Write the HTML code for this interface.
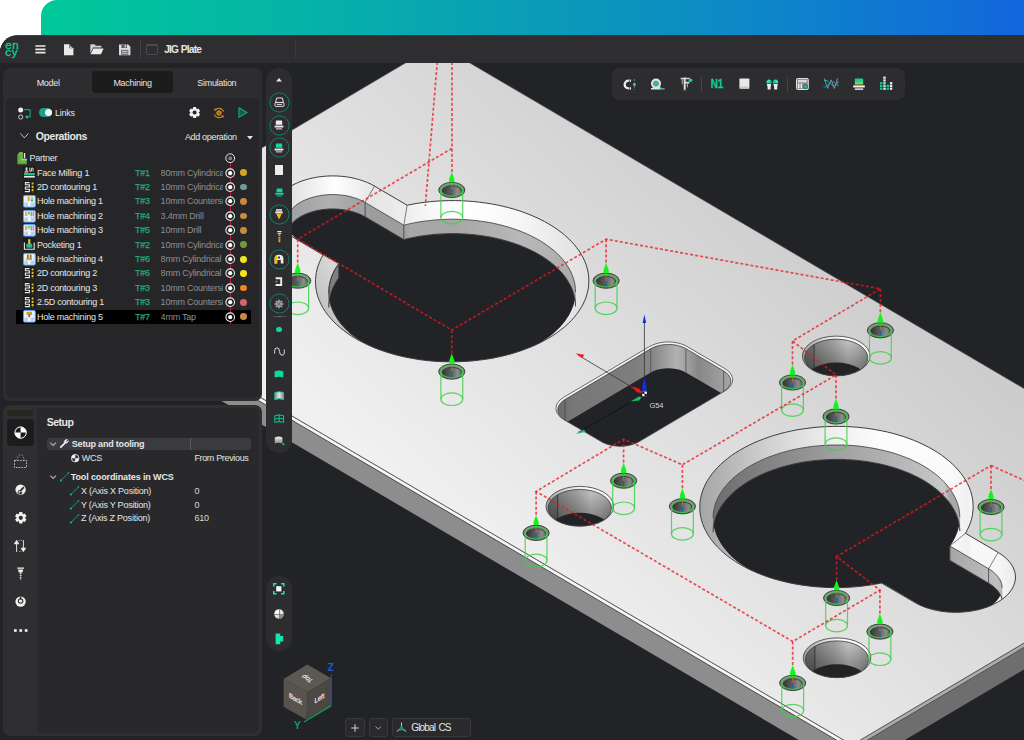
<!DOCTYPE html><html><head><meta charset="utf-8"><title>JIG Plate</title><style>
*{box-sizing:border-box;margin:0;padding:0}
html,body{width:1024px;height:740px;overflow:hidden;background:#fff}
body{position:relative;font-family:"Liberation Sans",sans-serif;font-size:9px;color:#e6e6e6;letter-spacing:-0.2px}
.abs{position:absolute}
#banner{left:41px;top:0;width:983px;height:40px;border-top-left-radius:16px;
 background:linear-gradient(90deg,#00c89a 0%,#06b3a8 26.3%,#0a9bb8 51.8%,#0e82cc 77.2%,#1266dc 100%)}
#app{left:0;top:0;width:1024px;height:740px;background:#222326;clip-path:inset(35.5px 0 0 0 round 17px 0 0 0)}
#scene{position:absolute;left:0;top:0}
#titlebar{left:0;top:35px;width:1024px;height:27.5px;background:#2e2e30}
.sepv{position:absolute;width:1px;background:#434345}
.panel{position:absolute;background:#2d2d2f;border-radius:7px}
.inner{position:absolute;background:#262628;border-radius:5px}
.t{position:absolute;white-space:pre;line-height:12px;height:12px}
.b{font-weight:700}
.row{position:absolute;left:0;width:259px;height:14.4px}
.tn{color:#1fa97c}
.tl{color:#8f8f91}
svg{position:absolute;overflow:visible}
</style></head><body>
<div id="banner" class="abs"></div>
<div id="app" class="abs">
<svg id="scene" width="1024" height="740" viewBox="0 0 1024 740">
<defs>
<linearGradient id="gTop" gradientUnits="userSpaceOnUse" x1="806.7" y1="215.1" x2="491" y2="563.2"><stop offset="0" stop-color="#cdcdcd"/><stop offset="1" stop-color="#f0f0f0"/></linearGradient>
<linearGradient id="gBand1" gradientUnits="userSpaceOnUse" x1="292" y1="0" x2="589" y2="0"><stop offset="0.000" stop-color="#e2e2e2"/><stop offset="0.148" stop-color="#ffffff"/><stop offset="0.269" stop-color="#e6e6e6"/><stop offset="0.330" stop-color="#e9e9e9"/><stop offset="0.384" stop-color="#eeeeee"/><stop offset="0.465" stop-color="#f8f8f8"/><stop offset="0.599" stop-color="#ffffff"/><stop offset="0.768" stop-color="#f6f6f6"/><stop offset="0.902" stop-color="#e8e8e8"/><stop offset="1.000" stop-color="#e0e0e0"/></linearGradient>
<linearGradient id="gWall1" gradientUnits="userSpaceOnUse" x1="292" y1="0" x2="582" y2="0"><stop offset="0.000" stop-color="#a0a0a0"/><stop offset="0.131" stop-color="#b0b0b0"/><stop offset="0.276" stop-color="#9c9c9c"/><stop offset="0.390" stop-color="#9e9e9e"/><stop offset="0.407" stop-color="#a8a8a8"/><stop offset="0.552" stop-color="#a6a6a6"/><stop offset="0.786" stop-color="#b8b8b8"/><stop offset="0.883" stop-color="#b2b2b2"/><stop offset="1.000" stop-color="#a8a8a8"/></linearGradient>
<linearGradient id="gBand2" gradientUnits="userSpaceOnUse" x1="699" y1="0" x2="1016" y2="0"><stop offset="0.000" stop-color="#a4a4a4"/><stop offset="0.098" stop-color="#b8b8b8"/><stop offset="0.224" stop-color="#d2d2d2"/><stop offset="0.413" stop-color="#eeeeee"/><stop offset="0.571" stop-color="#fcfcfc"/><stop offset="0.792" stop-color="#fafafa"/><stop offset="0.849" stop-color="#f0f0f0"/><stop offset="0.861" stop-color="#f8f8f8"/><stop offset="0.950" stop-color="#f6f6f6"/><stop offset="1.000" stop-color="#e8e8e8"/></linearGradient>
<linearGradient id="gWall2" gradientUnits="userSpaceOnUse" x1="699" y1="0" x2="1016" y2="0"><stop offset="0.000" stop-color="#686868"/><stop offset="0.129" stop-color="#787878"/><stop offset="0.319" stop-color="#909090"/><stop offset="0.432" stop-color="#a0a0a0"/><stop offset="0.634" stop-color="#b6b6b6"/><stop offset="0.773" stop-color="#c8c8c8"/><stop offset="0.792" stop-color="#a6a6a6"/><stop offset="0.940" stop-color="#c0c0c0"/><stop offset="0.950" stop-color="#b8b8b8"/><stop offset="1.000" stop-color="#b0b0b0"/></linearGradient>
<linearGradient id="gDark1" gradientUnits="userSpaceOnUse" x1="0" y1="250" x2="0" y2="330"><stop offset="0" stop-color="#000" stop-opacity="0.13"/><stop offset="1" stop-color="#000" stop-opacity="0.24"/></linearGradient>
<linearGradient id="gHole" x1="0" y1="0" x2="1" y2="0"><stop offset="0" stop-color="#6a6a6a"/><stop offset="0.15" stop-color="#6e6e6e"/><stop offset="0.155" stop-color="#7c7c7c"/><stop offset="0.45" stop-color="#9c9c9c"/><stop offset="0.68" stop-color="#bebebe"/><stop offset="0.85" stop-color="#b0b0b0"/><stop offset="1" stop-color="#989898"/></linearGradient>
<linearGradient id="gHoleV" x1="0" y1="0" x2="0" y2="1"><stop offset="0.1" stop-color="#000" stop-opacity="0"/><stop offset="0.75" stop-color="#000" stop-opacity="0.28"/></linearGradient>
<linearGradient id="gHoleB" x1="0" y1="0" x2="1" y2="0"><stop offset="0" stop-color="#9a9a9a"/><stop offset="0.35" stop-color="#e0e0e0"/><stop offset="0.6" stop-color="#ffffff"/><stop offset="1" stop-color="#f2f2f2"/></linearGradient>
<linearGradient id="gPock" gradientUnits="userSpaceOnUse" x1="556" y1="0" x2="734" y2="0"><stop offset="0" stop-color="#6a6a6a"/><stop offset="0.1" stop-color="#777777"/><stop offset="0.45" stop-color="#7e7e7e"/><stop offset="0.55" stop-color="#888888"/><stop offset="0.68" stop-color="#b2b2b2"/><stop offset="0.8" stop-color="#888888"/><stop offset="1" stop-color="#a8a8a8"/></linearGradient>
<linearGradient id="gSm" x1="0" y1="0" x2="1" y2="0"><stop offset="0" stop-color="#343434"/><stop offset="0.45" stop-color="#5c5c5c"/><stop offset="0.8" stop-color="#8c8c8c"/><stop offset="1" stop-color="#666666"/></linearGradient>
</defs>
<rect x="0" y="0" width="1024" height="740" fill="#222326"/>
<polygon points="47.8,276.8 852.0,749.2 852.0,771.3 47.8,298.9" fill="#8d8d8d"/>
<polygon points="852.0,749.2 1241.6,518.5 1241.6,540.6 852.0,771.3" fill="#6e6e6e"/>
<polygon points="49.7,273.6 852.0,744.9 852.0,749.2 47.8,276.8" fill="#f4f4f4" stroke="#3a3a3a" stroke-width="0.8"/>
<polygon points="852.0,744.9 1239.8,515.3 1241.6,518.5 852.0,749.2" fill="#ababab" stroke="#4a4a4a" stroke-width="0.8"/>
<polygon points="437.5,43.9 1239.8,515.3 852.0,744.9 49.7,273.6" fill="url(#gTop)" stroke="#4a4a4a" stroke-width="0.7"/>
<clipPath id="k0o"><path d="M407.1 205.2 L412.9 204.1 L418.8 203.1 L424.8 202.3 L430.8 201.6 L436.9 201.1 L443.0 200.8 L449.2 200.6 L455.3 200.6 L461.4 200.7 L467.5 201.1 L473.6 201.5 L479.6 202.2 L485.6 203.0 L491.5 203.9 L497.4 205.0 L503.1 206.3 L508.7 207.7 L514.3 209.2 L519.7 210.9 L524.9 212.8 L530.1 214.8 L535.0 216.9 L539.8 219.1 L544.4 221.5 L548.9 224.0 L553.1 226.6 L557.1 229.3 L561.0 232.1 L564.6 235.0 L567.9 238.1 L571.1 241.2 L574.0 244.3 L576.6 247.6 L579.1 250.9 L581.2 254.3 L583.1 257.7 L584.7 261.2 L586.1 264.7 L587.2 268.3 L588.0 271.9 L588.6 275.5 L588.8 279.1 L588.8 282.7 L588.6 286.3 L588.0 289.9 L587.2 293.5 L586.1 297.1 L584.7 300.6 L583.1 304.1 L581.2 307.6 L579.0 310.9 L576.6 314.3 L574.0 317.5 L571.1 320.7 L567.9 323.9 L564.5 326.9 L560.9 329.8 L557.1 332.7 L553.1 335.4 L548.8 338.0 L544.4 340.5 L539.8 342.9 L535.0 345.2 L530.0 347.3 L524.9 349.3 L519.6 351.2 L514.2 352.9 L508.7 354.5 L503.1 355.9 L497.3 357.2 L491.5 358.4 L485.6 359.3 L479.6 360.1 L473.6 360.8 L467.5 361.3 L461.4 361.6 L455.3 361.8 L449.1 361.8 L443.0 361.7 L436.9 361.4 L430.8 360.9 L424.8 360.3 L418.8 359.5 L412.9 358.5 L407.0 357.4 L401.3 356.2 L395.7 354.8 L390.1 353.2 L384.7 351.5 L379.5 349.7 L374.3 347.7 L369.4 345.6 L364.6 343.3 L360.0 341.0 L355.5 338.5 L351.3 335.9 L347.2 333.2 L343.4 330.3 L339.8 327.4 L336.4 324.4 L333.3 321.3 L330.4 318.1 L327.7 314.9 L325.3 311.6 L323.1 308.2 L321.2 304.7 L319.6 301.3 L318.2 297.7 L317.1 294.2 L316.3 290.6 L315.8 287.0 L315.5 283.4 L315.5 279.8 L315.8 276.2 L316.3 272.5 L317.1 269.0 L318.2 265.4 L319.6 261.9 L321.2 258.4 L323.1 254.9 L290.5 235.8 L287.4 233.8 L284.5 231.6 L281.9 229.3 L279.6 227.0 L277.7 224.5 L276.0 221.9 L274.8 219.2 L273.9 216.5 L273.3 213.8 L273.1 211.1 L273.3 208.3 L273.9 205.6 L274.8 202.9 L276.0 200.2 L277.7 197.6 L279.6 195.1 L281.9 192.7 L284.5 190.4 L287.4 188.3 L290.5 186.3 L294.0 184.4 L297.6 182.7 L301.5 181.1 L305.6 179.8 L309.8 178.6 L314.2 177.7 L318.7 176.9 L323.2 176.4 L327.9 176.0 L332.5 175.9 L337.2 176.0 L341.8 176.3 L346.4 176.8 L350.9 177.6 L355.2 178.5 L359.5 179.7 L363.6 181.0 L367.4 182.5 L371.1 184.2 L374.5 186.1Z"/></clipPath>
<clipPath id="k0i"><path d="M403.8 225.2 L409.1 223.9 L414.4 222.8 L419.9 221.8 L425.4 221.0 L430.9 220.4 L436.5 219.8 L442.2 219.5 L447.8 219.3 L453.5 219.2 L459.2 219.3 L464.8 219.6 L470.5 220.0 L476.1 220.5 L481.6 221.3 L487.1 222.1 L492.5 223.1 L497.8 224.3 L503.0 225.6 L508.1 227.0 L513.1 228.6 L518.0 230.3 L522.7 232.1 L527.3 234.1 L531.7 236.2 L536.0 238.4 L540.0 240.7 L543.9 243.1 L547.6 245.7 L551.1 248.3 L554.4 251.0 L557.5 253.8 L560.3 256.7 L562.9 259.7 L565.3 262.7 L567.4 265.8 L569.3 269.0 L571.0 272.1 L572.4 275.4 L573.5 278.7 L574.4 282.0 L575.1 285.3 L575.4 288.6 L575.5 292.0 L575.4 295.3 L575.0 298.7 L574.3 302.0 L573.4 305.3 L572.2 308.6 L570.7 311.8 L569.1 315.0 L567.1 318.1 L564.9 321.2 L562.5 324.3 L559.9 327.2 L557.0 330.1 L553.9 332.9 L550.6 335.7 L547.0 338.3 L543.3 340.8 L539.4 343.3 L535.3 345.6 L531.0 347.8 L526.6 349.9 L522.0 351.8 L517.2 353.7 L512.3 355.4 L507.3 357.0 L502.2 358.4 L497.0 359.7 L491.6 360.9 L486.2 361.9 L480.7 362.7 L475.2 363.4 L469.6 364.0 L463.9 364.4 L458.3 364.7 L452.6 364.8 L446.9 364.7 L441.3 364.5 L435.6 364.2 L430.0 363.6 L424.5 363.0 L419.0 362.2 L413.6 361.2 L408.2 360.1 L403.0 358.8 L397.8 357.5 L392.8 355.9 L387.9 354.3 L383.1 352.5 L378.5 350.5 L374.0 348.5 L369.7 346.3 L365.6 344.0 L361.6 341.6 L357.9 339.1 L354.3 336.5 L350.9 333.9 L347.8 331.1 L344.9 328.2 L342.2 325.3 L339.7 322.3 L337.5 319.2 L335.6 316.0 L333.8 312.9 L332.3 309.6 L331.1 306.4 L330.1 303.1 L329.4 299.8 L329.0 296.4 L328.8 293.1 L328.9 289.7 L329.2 286.4 L329.8 283.1 L330.6 279.8 L331.7 276.5 L333.1 273.2 L334.7 270.0 L336.6 266.8 L338.7 263.7 L300.0 241.0 L297.5 239.4 L295.3 237.8 L293.3 236.0 L291.5 234.1 L290.0 232.2 L288.7 230.2 L287.7 228.2 L287.0 226.1 L286.6 223.9 L286.5 221.8 L286.6 219.7 L287.0 217.6 L287.7 215.5 L288.7 213.4 L290.0 211.4 L291.5 209.5 L293.3 207.6 L295.3 205.8 L297.5 204.1 L300.0 202.6 L302.6 201.1 L305.5 199.8 L308.5 198.6 L311.6 197.6 L314.9 196.7 L318.3 195.9 L321.8 195.3 L325.3 194.9 L328.9 194.6 L332.5 194.5 L336.1 194.6 L339.7 194.9 L343.3 195.3 L346.8 195.8 L350.1 196.6 L353.4 197.5 L356.6 198.5 L359.6 199.7 L362.4 201.0 L365.1 202.4Z"/></clipPath>
<g clip-path="url(#k0o)">
<path d="M407.1 205.2 L412.9 204.1 L418.8 203.1 L424.8 202.3 L430.8 201.6 L436.9 201.1 L443.0 200.8 L449.2 200.6 L455.3 200.6 L461.4 200.7 L467.5 201.1 L473.6 201.5 L479.6 202.2 L485.6 203.0 L491.5 203.9 L497.4 205.0 L503.1 206.3 L508.7 207.7 L514.3 209.2 L519.7 210.9 L524.9 212.8 L530.1 214.8 L535.0 216.9 L539.8 219.1 L544.4 221.5 L548.9 224.0 L553.1 226.6 L557.1 229.3 L561.0 232.1 L564.6 235.0 L567.9 238.1 L571.1 241.2 L574.0 244.3 L576.6 247.6 L579.1 250.9 L581.2 254.3 L583.1 257.7 L584.7 261.2 L586.1 264.7 L587.2 268.3 L588.0 271.9 L588.6 275.5 L588.8 279.1 L588.8 282.7 L588.6 286.3 L588.0 289.9 L587.2 293.5 L586.1 297.1 L584.7 300.6 L583.1 304.1 L581.2 307.6 L579.0 310.9 L576.6 314.3 L574.0 317.5 L571.1 320.7 L567.9 323.9 L564.5 326.9 L560.9 329.8 L557.1 332.7 L553.1 335.4 L548.8 338.0 L544.4 340.5 L539.8 342.9 L535.0 345.2 L530.0 347.3 L524.9 349.3 L519.6 351.2 L514.2 352.9 L508.7 354.5 L503.1 355.9 L497.3 357.2 L491.5 358.4 L485.6 359.3 L479.6 360.1 L473.6 360.8 L467.5 361.3 L461.4 361.6 L455.3 361.8 L449.1 361.8 L443.0 361.7 L436.9 361.4 L430.8 360.9 L424.8 360.3 L418.8 359.5 L412.9 358.5 L407.0 357.4 L401.3 356.2 L395.7 354.8 L390.1 353.2 L384.7 351.5 L379.5 349.7 L374.3 347.7 L369.4 345.6 L364.6 343.3 L360.0 341.0 L355.5 338.5 L351.3 335.9 L347.2 333.2 L343.4 330.3 L339.8 327.4 L336.4 324.4 L333.3 321.3 L330.4 318.1 L327.7 314.9 L325.3 311.6 L323.1 308.2 L321.2 304.7 L319.6 301.3 L318.2 297.7 L317.1 294.2 L316.3 290.6 L315.8 287.0 L315.5 283.4 L315.5 279.8 L315.8 276.2 L316.3 272.5 L317.1 269.0 L318.2 265.4 L319.6 261.9 L321.2 258.4 L323.1 254.9 L290.5 235.8 L287.4 233.8 L284.5 231.6 L281.9 229.3 L279.6 227.0 L277.7 224.5 L276.0 221.9 L274.8 219.2 L273.9 216.5 L273.3 213.8 L273.1 211.1 L273.3 208.3 L273.9 205.6 L274.8 202.9 L276.0 200.2 L277.7 197.6 L279.6 195.1 L281.9 192.7 L284.5 190.4 L287.4 188.3 L290.5 186.3 L294.0 184.4 L297.6 182.7 L301.5 181.1 L305.6 179.8 L309.8 178.6 L314.2 177.7 L318.7 176.9 L323.2 176.4 L327.9 176.0 L332.5 175.9 L337.2 176.0 L341.8 176.3 L346.4 176.8 L350.9 177.6 L355.2 178.5 L359.5 179.7 L363.6 181.0 L367.4 182.5 L371.1 184.2 L374.5 186.1Z" fill="url(#gBand1)"/>
<path d="M403.8 225.2 L409.1 223.9 L414.4 222.8 L419.9 221.8 L425.4 221.0 L430.9 220.4 L436.5 219.8 L442.2 219.5 L447.8 219.3 L453.5 219.2 L459.2 219.3 L464.8 219.6 L470.5 220.0 L476.1 220.5 L481.6 221.3 L487.1 222.1 L492.5 223.1 L497.8 224.3 L503.0 225.6 L508.1 227.0 L513.1 228.6 L518.0 230.3 L522.7 232.1 L527.3 234.1 L531.7 236.2 L536.0 238.4 L540.0 240.7 L543.9 243.1 L547.6 245.7 L551.1 248.3 L554.4 251.0 L557.5 253.8 L560.3 256.7 L562.9 259.7 L565.3 262.7 L567.4 265.8 L569.3 269.0 L571.0 272.1 L572.4 275.4 L573.5 278.7 L574.4 282.0 L575.1 285.3 L575.4 288.6 L575.5 292.0 L575.4 295.3 L575.0 298.7 L574.3 302.0 L573.4 305.3 L572.2 308.6 L570.7 311.8 L569.1 315.0 L567.1 318.1 L564.9 321.2 L562.5 324.3 L559.9 327.2 L557.0 330.1 L553.9 332.9 L550.6 335.7 L547.0 338.3 L543.3 340.8 L539.4 343.3 L535.3 345.6 L531.0 347.8 L526.6 349.9 L522.0 351.8 L517.2 353.7 L512.3 355.4 L507.3 357.0 L502.2 358.4 L497.0 359.7 L491.6 360.9 L486.2 361.9 L480.7 362.7 L475.2 363.4 L469.6 364.0 L463.9 364.4 L458.3 364.7 L452.6 364.8 L446.9 364.7 L441.3 364.5 L435.6 364.2 L430.0 363.6 L424.5 363.0 L419.0 362.2 L413.6 361.2 L408.2 360.1 L403.0 358.8 L397.8 357.5 L392.8 355.9 L387.9 354.3 L383.1 352.5 L378.5 350.5 L374.0 348.5 L369.7 346.3 L365.6 344.0 L361.6 341.6 L357.9 339.1 L354.3 336.5 L350.9 333.9 L347.8 331.1 L344.9 328.2 L342.2 325.3 L339.7 322.3 L337.5 319.2 L335.6 316.0 L333.8 312.9 L332.3 309.6 L331.1 306.4 L330.1 303.1 L329.4 299.8 L329.0 296.4 L328.8 293.1 L328.9 289.7 L329.2 286.4 L329.8 283.1 L330.6 279.8 L331.7 276.5 L333.1 273.2 L334.7 270.0 L336.6 266.8 L338.7 263.7 L300.0 241.0 L297.5 239.4 L295.3 237.8 L293.3 236.0 L291.5 234.1 L290.0 232.2 L288.7 230.2 L287.7 228.2 L287.0 226.1 L286.6 223.9 L286.5 221.8 L286.6 219.7 L287.0 217.6 L287.7 215.5 L288.7 213.4 L290.0 211.4 L291.5 209.5 L293.3 207.6 L295.3 205.8 L297.5 204.1 L300.0 202.6 L302.6 201.1 L305.5 199.8 L308.5 198.6 L311.6 197.6 L314.9 196.7 L318.3 195.9 L321.8 195.3 L325.3 194.9 L328.9 194.6 L332.5 194.5 L336.1 194.6 L339.7 194.9 L343.3 195.3 L346.8 195.8 L350.1 196.6 L353.4 197.5 L356.6 198.5 L359.6 199.7 L362.4 201.0 L365.1 202.4Z" fill="url(#gWall1)"/>
<g clip-path="url(#k0i)"><path d="M403.8 239.6 L409.1 238.3 L414.4 237.2 L419.9 236.2 L425.4 235.4 L430.9 234.8 L436.5 234.2 L442.2 233.9 L447.8 233.7 L453.5 233.6 L459.2 233.7 L464.8 234.0 L470.5 234.4 L476.1 234.9 L481.6 235.7 L487.1 236.5 L492.5 237.5 L497.8 238.7 L503.0 240.0 L508.1 241.4 L513.1 243.0 L518.0 244.7 L522.7 246.5 L527.3 248.5 L531.7 250.6 L536.0 252.8 L540.0 255.1 L543.9 257.5 L547.6 260.1 L551.1 262.7 L554.4 265.4 L557.5 268.2 L560.3 271.1 L562.9 274.1 L565.3 277.1 L567.4 280.2 L569.3 283.4 L571.0 286.6 L572.4 289.8 L573.5 293.1 L574.4 296.4 L575.1 299.7 L575.4 303.0 L575.5 306.4 L575.4 309.7 L575.0 313.1 L574.3 316.4 L573.4 319.7 L572.2 323.0 L570.7 326.2 L569.1 329.4 L567.1 332.6 L564.9 335.6 L562.5 338.7 L559.9 341.6 L557.0 344.5 L553.9 347.3 L550.6 350.1 L547.0 352.7 L543.3 355.2 L539.4 357.7 L535.3 360.0 L531.0 362.2 L526.6 364.3 L522.0 366.2 L517.2 368.1 L512.3 369.8 L507.3 371.4 L502.2 372.8 L497.0 374.1 L491.6 375.3 L486.2 376.3 L480.7 377.1 L475.2 377.8 L469.6 378.4 L463.9 378.8 L458.3 379.1 L452.6 379.2 L446.9 379.1 L441.3 378.9 L435.6 378.6 L430.0 378.0 L424.5 377.4 L419.0 376.6 L413.6 375.6 L408.2 374.5 L403.0 373.3 L397.8 371.9 L392.8 370.3 L387.9 368.7 L383.1 366.9 L378.5 364.9 L374.0 362.9 L369.7 360.7 L365.6 358.4 L361.6 356.0 L357.9 353.5 L354.3 350.9 L350.9 348.3 L347.8 345.5 L344.9 342.6 L342.2 339.7 L339.7 336.7 L337.5 333.6 L335.6 330.5 L333.8 327.3 L332.3 324.0 L331.1 320.8 L330.1 317.5 L329.4 314.2 L329.0 310.8 L328.8 307.5 L328.9 304.1 L329.2 300.8 L329.8 297.5 L330.6 294.2 L331.7 290.9 L333.1 287.6 L334.7 284.4 L336.6 281.2 L338.7 278.1 L300.0 255.4 L297.5 253.8 L295.3 252.2 L293.3 250.4 L291.5 248.5 L290.0 246.6 L288.7 244.6 L287.7 242.6 L287.0 240.5 L286.6 238.4 L286.5 236.2 L286.6 234.1 L287.0 232.0 L287.7 229.9 L288.7 227.8 L290.0 225.8 L291.5 223.9 L293.3 222.0 L295.3 220.2 L297.5 218.6 L300.0 217.0 L302.6 215.5 L305.5 214.2 L308.5 213.0 L311.6 212.0 L314.9 211.1 L318.3 210.3 L321.8 209.7 L325.3 209.3 L328.9 209.0 L332.5 208.9 L336.1 209.0 L339.7 209.3 L343.3 209.7 L346.8 210.2 L350.1 211.0 L353.4 211.9 L356.6 212.9 L359.6 214.1 L362.4 215.4 L365.1 216.8Z" fill="#222326" stroke="#2a2a2a" stroke-width="0.8"/></g>
<path d="M328.8 293.1 L328.9 289.7 L329.2 286.4 L329.8 283.1 L330.6 279.8 L331.7 276.5 L333.1 273.2 L334.7 270.0 L336.6 266.8 L338.7 263.7 L338.7 278.1 L336.6 281.2 L334.7 284.4 L333.1 287.6 L331.7 290.9 L330.6 294.2 L329.8 297.5 L329.2 300.8 L328.9 304.1 L328.8 307.5Z" fill="url(#gWall1)" stroke="#9a9a9a" stroke-width="0.3"/>
<path d="M286.5 221.8 L286.6 219.7 L287.0 217.6 L287.7 215.5 L288.7 213.4 L290.0 211.4 L291.5 209.5 L293.3 207.6 L295.3 205.8 L297.5 204.1 L300.0 202.6 L302.6 201.1 L305.5 199.8 L308.5 198.6 L311.6 197.6 L314.9 196.7 L318.3 195.9 L321.8 195.3 L325.3 194.9 L328.9 194.6 L332.5 194.5 L336.1 194.6 L339.7 194.9 L343.3 195.3 L346.8 195.8 L350.1 196.6 L353.4 197.5 L356.6 198.5 L359.6 199.7 L362.4 201.0 L365.1 202.4 L403.8 225.2 L409.1 223.9 L414.4 222.8 L419.9 221.8 L425.4 221.0 L430.9 220.4 L436.5 219.8 L442.2 219.5 L447.8 219.3 L453.5 219.2 L459.2 219.3 L464.8 219.6 L470.5 220.0 L476.1 220.5 L481.6 221.3 L487.1 222.1 L492.5 223.1 L497.8 224.3 L503.0 225.6 L508.1 227.0 L513.1 228.6 L518.0 230.3 L522.7 232.1 L527.3 234.1 L531.7 236.2 L536.0 238.4 L540.0 240.7 L543.9 243.1 L547.6 245.7 L551.1 248.3 L554.4 251.0 L557.5 253.8 L560.3 256.7 L562.9 259.7 L565.3 262.7 L567.4 265.8 L569.3 269.0 L571.0 272.1 L572.4 275.4 L573.5 278.7 L574.4 282.0 L575.1 285.3 L575.4 288.6 L575.5 292.0 L575.5 306.4 L575.4 303.0 L575.1 299.7 L574.4 296.4 L573.5 293.1 L572.4 289.8 L571.0 286.6 L569.3 283.4 L567.4 280.2 L565.3 277.1 L562.9 274.1 L560.3 271.1 L557.5 268.2 L554.4 265.4 L551.1 262.7 L547.6 260.1 L543.9 257.5 L540.0 255.1 L536.0 252.8 L531.7 250.6 L527.3 248.5 L522.7 246.5 L518.0 244.7 L513.1 243.0 L508.1 241.4 L503.0 240.0 L497.8 238.7 L492.5 237.5 L487.1 236.5 L481.6 235.7 L476.1 234.9 L470.5 234.4 L464.8 234.0 L459.2 233.7 L453.5 233.6 L447.8 233.7 L442.2 233.9 L436.5 234.2 L430.9 234.8 L425.4 235.4 L419.9 236.2 L414.4 237.2 L409.1 238.3 L403.8 239.6 L365.1 216.8 L362.4 215.4 L359.6 214.1 L356.6 212.9 L353.4 211.9 L350.1 211.0 L346.8 210.2 L343.3 209.7 L339.7 209.3 L336.1 209.0 L332.5 208.9 L328.9 209.0 L325.3 209.3 L321.8 209.7 L318.3 210.3 L314.9 211.1 L311.6 212.0 L308.5 213.0 L305.5 214.2 L302.6 215.5 L300.0 217.0 L297.5 218.6 L295.3 220.2 L293.3 222.0 L291.5 223.9 L290.0 225.8 L288.7 227.8 L287.7 229.9 L287.0 232.0 L286.6 234.1 L286.5 236.2Z" fill="url(#gWall1)" stroke="#9a9a9a" stroke-width="0.3"/>
<path d="M315.8 287.0 L315.5 283.4 L315.5 279.8 L315.8 276.2 L316.3 272.5 L317.1 269.0 L318.2 265.4 L319.6 261.9 L321.2 258.4 L323.1 254.9 L338.7 263.7 L336.6 266.8 L334.7 270.0 L333.1 273.2 L331.7 276.5 L330.6 279.8 L329.8 283.1 L329.2 286.4 L328.9 289.7 L328.8 293.1Z" fill="url(#gBand1)"/>
<path d="M273.1 211.1 L273.3 208.3 L273.9 205.6 L274.8 202.9 L276.0 200.2 L277.7 197.6 L279.6 195.1 L281.9 192.7 L284.5 190.4 L287.4 188.3 L290.5 186.3 L294.0 184.4 L297.6 182.7 L301.5 181.1 L305.6 179.8 L309.8 178.6 L314.2 177.7 L318.7 176.9 L323.2 176.4 L327.9 176.0 L332.5 175.9 L337.2 176.0 L341.8 176.3 L346.4 176.8 L350.9 177.6 L355.2 178.5 L359.5 179.7 L363.6 181.0 L367.4 182.5 L371.1 184.2 L374.5 186.1 L407.1 205.2 L412.9 204.1 L418.8 203.1 L424.8 202.3 L430.8 201.6 L436.9 201.1 L443.0 200.8 L449.2 200.6 L455.3 200.6 L461.4 200.7 L467.5 201.1 L473.6 201.5 L479.6 202.2 L485.6 203.0 L491.5 203.9 L497.4 205.0 L503.1 206.3 L508.7 207.7 L514.3 209.2 L519.7 210.9 L524.9 212.8 L530.1 214.8 L535.0 216.9 L539.8 219.1 L544.4 221.5 L548.9 224.0 L553.1 226.6 L557.1 229.3 L561.0 232.1 L564.6 235.0 L567.9 238.1 L571.1 241.2 L574.0 244.3 L576.6 247.6 L579.1 250.9 L581.2 254.3 L583.1 257.7 L584.7 261.2 L586.1 264.7 L587.2 268.3 L588.0 271.9 L588.6 275.5 L588.8 279.1 L588.8 282.7 L575.5 292.0 L575.4 288.6 L575.1 285.3 L574.4 282.0 L573.5 278.7 L572.4 275.4 L571.0 272.1 L569.3 269.0 L567.4 265.8 L565.3 262.7 L562.9 259.7 L560.3 256.7 L557.5 253.8 L554.4 251.0 L551.1 248.3 L547.6 245.7 L543.9 243.1 L540.0 240.7 L536.0 238.4 L531.7 236.2 L527.3 234.1 L522.7 232.1 L518.0 230.3 L513.1 228.6 L508.1 227.0 L503.0 225.6 L497.8 224.3 L492.5 223.1 L487.1 222.1 L481.6 221.3 L476.1 220.5 L470.5 220.0 L464.8 219.6 L459.2 219.3 L453.5 219.2 L447.8 219.3 L442.2 219.5 L436.5 219.8 L430.9 220.4 L425.4 221.0 L419.9 221.8 L414.4 222.8 L409.1 223.9 L403.8 225.2 L365.1 202.4 L362.4 201.0 L359.6 199.7 L356.6 198.5 L353.4 197.5 L350.1 196.6 L346.8 195.8 L343.3 195.3 L339.7 194.9 L336.1 194.6 L332.5 194.5 L328.9 194.6 L325.3 194.9 L321.8 195.3 L318.3 195.9 L314.9 196.7 L311.6 197.6 L308.5 198.6 L305.5 199.8 L302.6 201.1 L300.0 202.6 L297.5 204.1 L295.3 205.8 L293.3 207.6 L291.5 209.5 L290.0 211.4 L288.7 213.4 L287.7 215.5 L287.0 217.6 L286.6 219.7 L286.5 221.8Z" fill="url(#gBand1)"/>
<path d="M328.8 293.1 L328.9 289.7 L329.2 286.4 L329.8 283.1 L330.6 279.8 L331.7 276.5 L333.1 273.2 L334.7 270.0 L336.6 266.8 L338.7 263.7" fill="none" stroke="#3c3c3c" stroke-width="0.8"/>
<path d="M328.8 307.5 L328.9 304.1 L329.2 300.8 L329.8 297.5 L330.6 294.2 L331.7 290.9 L333.1 287.6 L334.7 284.4 L336.6 281.2 L338.7 278.1" fill="none" stroke="#2c2c2c" stroke-width="0.8"/>
<path d="M286.5 221.8 L286.6 219.7 L287.0 217.6 L287.7 215.5 L288.7 213.4 L290.0 211.4 L291.5 209.5 L293.3 207.6 L295.3 205.8 L297.5 204.1 L300.0 202.6 L302.6 201.1 L305.5 199.8 L308.5 198.6 L311.6 197.6 L314.9 196.7 L318.3 195.9 L321.8 195.3 L325.3 194.9 L328.9 194.6 L332.5 194.5 L336.1 194.6 L339.7 194.9 L343.3 195.3 L346.8 195.8 L350.1 196.6 L353.4 197.5 L356.6 198.5 L359.6 199.7 L362.4 201.0 L365.1 202.4 L403.8 225.2 L409.1 223.9 L414.4 222.8 L419.9 221.8 L425.4 221.0 L430.9 220.4 L436.5 219.8 L442.2 219.5 L447.8 219.3 L453.5 219.2 L459.2 219.3 L464.8 219.6 L470.5 220.0 L476.1 220.5 L481.6 221.3 L487.1 222.1 L492.5 223.1 L497.8 224.3 L503.0 225.6 L508.1 227.0 L513.1 228.6 L518.0 230.3 L522.7 232.1 L527.3 234.1 L531.7 236.2 L536.0 238.4 L540.0 240.7 L543.9 243.1 L547.6 245.7 L551.1 248.3 L554.4 251.0 L557.5 253.8 L560.3 256.7 L562.9 259.7 L565.3 262.7 L567.4 265.8 L569.3 269.0 L571.0 272.1 L572.4 275.4 L573.5 278.7 L574.4 282.0 L575.1 285.3 L575.4 288.6 L575.5 292.0" fill="none" stroke="#3c3c3c" stroke-width="0.8"/>
<path d="M286.5 236.2 L286.6 234.1 L287.0 232.0 L287.7 229.9 L288.7 227.8 L290.0 225.8 L291.5 223.9 L293.3 222.0 L295.3 220.2 L297.5 218.6 L300.0 217.0 L302.6 215.5 L305.5 214.2 L308.5 213.0 L311.6 212.0 L314.9 211.1 L318.3 210.3 L321.8 209.7 L325.3 209.3 L328.9 209.0 L332.5 208.9 L336.1 209.0 L339.7 209.3 L343.3 209.7 L346.8 210.2 L350.1 211.0 L353.4 211.9 L356.6 212.9 L359.6 214.1 L362.4 215.4 L365.1 216.8 L403.8 239.6 L409.1 238.3 L414.4 237.2 L419.9 236.2 L425.4 235.4 L430.9 234.8 L436.5 234.2 L442.2 233.9 L447.8 233.7 L453.5 233.6 L459.2 233.7 L464.8 234.0 L470.5 234.4 L476.1 234.9 L481.6 235.7 L487.1 236.5 L492.5 237.5 L497.8 238.7 L503.0 240.0 L508.1 241.4 L513.1 243.0 L518.0 244.7 L522.7 246.5 L527.3 248.5 L531.7 250.6 L536.0 252.8 L540.0 255.1 L543.9 257.5 L547.6 260.1 L551.1 262.7 L554.4 265.4 L557.5 268.2 L560.3 271.1 L562.9 274.1 L565.3 277.1 L567.4 280.2 L569.3 283.4 L571.0 286.6 L572.4 289.8 L573.5 293.1 L574.4 296.4 L575.1 299.7 L575.4 303.0 L575.5 306.4" fill="none" stroke="#2c2c2c" stroke-width="0.8"/>
<line x1="403.8" y1="225.2" x2="403.8" y2="239.6" stroke="#3c3c3c" stroke-width="0.8"/>
<line x1="407.1" y1="205.2" x2="403.8" y2="225.2" stroke="#4a4a4a" stroke-width="0.7"/>
<line x1="338.7" y1="263.7" x2="338.7" y2="278.1" stroke="#3c3c3c" stroke-width="0.8"/>
<line x1="323.1" y1="254.9" x2="338.7" y2="263.7" stroke="#4a4a4a" stroke-width="0.7"/>
<line x1="365.1" y1="202.4" x2="365.1" y2="216.8" stroke="#3c3c3c" stroke-width="0.8"/>
<line x1="374.5" y1="186.1" x2="365.1" y2="202.4" stroke="#4a4a4a" stroke-width="0.7"/>
<path d="M364.6 343.3 L360.0 341.0 L355.5 338.5 L351.3 335.9 L347.2 333.2 L343.4 330.3 L339.8 327.4 L336.4 324.4 L333.3 321.3 L330.4 318.1 L327.7 314.9 L325.3 311.6 L323.1 308.2 L321.2 304.7 L319.6 301.3 L318.2 297.7 L317.1 294.2 L316.3 290.6 L315.8 287.0 L315.5 283.4 L315.5 279.8 L315.8 276.2 L316.3 272.5 L317.1 269.0 L318.2 265.4 L319.6 261.9 L321.2 258.4 L323.1 254.9 L338.7 263.7 L336.6 266.8 L334.7 270.0 L333.1 273.2 L331.7 276.5 L330.6 279.8 L329.8 283.1 L329.2 286.4 L328.9 289.7 L328.8 293.1 L329.0 296.4 L329.4 299.8 L330.1 303.1 L331.1 306.4 L332.3 309.6 L333.8 312.9 L335.6 316.0 L337.5 319.2 L339.7 322.3 L342.2 325.3 L344.9 328.2 L347.8 331.1 L350.9 333.9 L354.3 336.5 L357.9 339.1 L361.6 341.6 L365.6 344.0 L369.7 346.3Z" fill="url(#gDark1)"/>
<path d="M328.8 293.1 L328.9 289.7 L329.2 286.4 L329.8 283.1 L330.6 279.8 L331.7 276.5 L333.1 273.2 L334.7 270.0 L336.6 266.8 L338.7 263.7 L338.7 278.1 L336.6 281.2 L334.7 284.4 L333.1 287.6 L331.7 290.9 L330.6 294.2 L329.8 297.5 L329.2 300.8 L328.9 304.1 L328.8 307.5Z" fill="#000" fill-opacity="0.27"/>
<path d="M369.7 346.3 L365.6 344.0 L361.6 341.6 L357.9 339.1 L354.3 336.5 L350.9 333.9 L347.8 331.1 L344.9 328.2 L342.2 325.3 L339.7 322.3 L337.5 319.2 L335.6 316.0 L333.8 312.9 L332.3 309.6 L331.1 306.4 L330.1 303.1 L329.4 299.8 L329.0 296.4 L328.8 293.1 L328.9 289.7 L329.2 286.4 L329.8 283.1 L330.6 279.8 L331.7 276.5 L333.1 273.2 L334.7 270.0 L336.6 266.8 L338.7 263.7" fill="none" stroke="#3c3c3c" stroke-width="0.8"/>
</g>
<path d="M407.1 205.2 L412.9 204.1 L418.8 203.1 L424.8 202.3 L430.8 201.6 L436.9 201.1 L443.0 200.8 L449.2 200.6 L455.3 200.6 L461.4 200.7 L467.5 201.1 L473.6 201.5 L479.6 202.2 L485.6 203.0 L491.5 203.9 L497.4 205.0 L503.1 206.3 L508.7 207.7 L514.3 209.2 L519.7 210.9 L524.9 212.8 L530.1 214.8 L535.0 216.9 L539.8 219.1 L544.4 221.5 L548.9 224.0 L553.1 226.6 L557.1 229.3 L561.0 232.1 L564.6 235.0 L567.9 238.1 L571.1 241.2 L574.0 244.3 L576.6 247.6 L579.1 250.9 L581.2 254.3 L583.1 257.7 L584.7 261.2 L586.1 264.7 L587.2 268.3 L588.0 271.9 L588.6 275.5 L588.8 279.1 L588.8 282.7 L588.6 286.3 L588.0 289.9 L587.2 293.5 L586.1 297.1 L584.7 300.6 L583.1 304.1 L581.2 307.6 L579.0 310.9 L576.6 314.3 L574.0 317.5 L571.1 320.7 L567.9 323.9 L564.5 326.9 L560.9 329.8 L557.1 332.7 L553.1 335.4 L548.8 338.0 L544.4 340.5 L539.8 342.9 L535.0 345.2 L530.0 347.3 L524.9 349.3 L519.6 351.2 L514.2 352.9 L508.7 354.5 L503.1 355.9 L497.3 357.2 L491.5 358.4 L485.6 359.3 L479.6 360.1 L473.6 360.8 L467.5 361.3 L461.4 361.6 L455.3 361.8 L449.1 361.8 L443.0 361.7 L436.9 361.4 L430.8 360.9 L424.8 360.3 L418.8 359.5 L412.9 358.5 L407.0 357.4 L401.3 356.2 L395.7 354.8 L390.1 353.2 L384.7 351.5 L379.5 349.7 L374.3 347.7 L369.4 345.6 L364.6 343.3 L360.0 341.0 L355.5 338.5 L351.3 335.9 L347.2 333.2 L343.4 330.3 L339.8 327.4 L336.4 324.4 L333.3 321.3 L330.4 318.1 L327.7 314.9 L325.3 311.6 L323.1 308.2 L321.2 304.7 L319.6 301.3 L318.2 297.7 L317.1 294.2 L316.3 290.6 L315.8 287.0 L315.5 283.4 L315.5 279.8 L315.8 276.2 L316.3 272.5 L317.1 269.0 L318.2 265.4 L319.6 261.9 L321.2 258.4 L323.1 254.9 L290.5 235.8 L287.4 233.8 L284.5 231.6 L281.9 229.3 L279.6 227.0 L277.7 224.5 L276.0 221.9 L274.8 219.2 L273.9 216.5 L273.3 213.8 L273.1 211.1 L273.3 208.3 L273.9 205.6 L274.8 202.9 L276.0 200.2 L277.7 197.6 L279.6 195.1 L281.9 192.7 L284.5 190.4 L287.4 188.3 L290.5 186.3 L294.0 184.4 L297.6 182.7 L301.5 181.1 L305.6 179.8 L309.8 178.6 L314.2 177.7 L318.7 176.9 L323.2 176.4 L327.9 176.0 L332.5 175.9 L337.2 176.0 L341.8 176.3 L346.4 176.8 L350.9 177.6 L355.2 178.5 L359.5 179.7 L363.6 181.0 L367.4 182.5 L371.1 184.2 L374.5 186.1Z" fill="none" stroke="#3e3e3e" stroke-width="1"/>
<clipPath id="k1o"><path d="M881.5 583.0 L875.7 584.1 L869.8 585.1 L863.8 585.9 L857.8 586.6 L851.7 587.1 L845.6 587.4 L839.4 587.6 L833.3 587.6 L827.2 587.5 L821.1 587.1 L815.0 586.7 L809.0 586.0 L803.0 585.2 L797.1 584.3 L791.2 583.2 L785.5 581.9 L779.9 580.5 L774.3 579.0 L768.9 577.3 L763.7 575.4 L758.5 573.4 L753.6 571.3 L748.8 569.1 L744.2 566.7 L739.7 564.2 L735.5 561.6 L731.5 558.9 L727.6 556.1 L724.0 553.2 L720.7 550.1 L717.5 547.0 L714.6 543.9 L712.0 540.6 L709.5 537.3 L707.4 533.9 L705.5 530.5 L703.9 527.0 L702.5 523.5 L701.4 519.9 L700.6 516.3 L700.0 512.7 L699.8 509.1 L699.8 505.5 L700.0 501.9 L700.6 498.3 L701.4 494.7 L702.5 491.1 L703.9 487.6 L705.5 484.1 L707.4 480.6 L709.6 477.3 L712.0 473.9 L714.6 470.7 L717.5 467.5 L720.7 464.3 L724.1 461.3 L727.7 458.4 L731.5 455.5 L735.5 452.8 L739.8 450.2 L744.2 447.7 L748.8 445.3 L753.6 443.0 L758.6 440.9 L763.7 438.9 L769.0 437.0 L774.4 435.3 L779.9 433.7 L785.5 432.3 L791.3 431.0 L797.1 429.8 L803.0 428.9 L809.0 428.1 L815.0 427.4 L821.1 426.9 L827.2 426.6 L833.3 426.4 L839.5 426.4 L845.6 426.5 L851.7 426.8 L857.8 427.3 L863.8 427.9 L869.8 428.7 L875.7 429.7 L881.6 430.8 L887.3 432.0 L892.9 433.4 L898.5 435.0 L903.9 436.7 L909.1 438.5 L914.3 440.5 L919.2 442.6 L924.0 444.9 L928.6 447.2 L933.1 449.7 L937.3 452.3 L941.4 455.0 L945.2 457.9 L948.8 460.8 L952.2 463.8 L955.3 466.9 L958.2 470.1 L960.9 473.3 L963.3 476.6 L965.5 480.0 L967.4 483.5 L969.0 486.9 L970.4 490.5 L971.5 494.0 L972.3 497.6 L972.8 501.2 L973.1 504.8 L973.1 508.4 L972.8 512.0 L972.3 515.7 L971.5 519.2 L970.4 522.8 L969.0 526.3 L967.4 529.8 L965.5 533.3 L998.1 552.4 L1001.2 554.4 L1004.1 556.6 L1006.7 558.9 L1009.0 561.2 L1010.9 563.7 L1012.6 566.3 L1013.8 569.0 L1014.7 571.7 L1015.3 574.4 L1015.5 577.1 L1015.3 579.9 L1014.7 582.6 L1013.8 585.3 L1012.6 588.0 L1010.9 590.6 L1009.0 593.1 L1006.7 595.5 L1004.1 597.8 L1001.2 599.9 L998.1 601.9 L994.6 603.8 L991.0 605.5 L987.1 607.1 L983.0 608.4 L978.8 609.6 L974.4 610.5 L969.9 611.3 L965.4 611.8 L960.7 612.2 L956.1 612.3 L951.4 612.2 L946.8 611.9 L942.2 611.4 L937.7 610.6 L933.4 609.7 L929.1 608.5 L925.0 607.2 L921.2 605.7 L917.5 604.0 L914.1 602.1Z"/></clipPath>
<clipPath id="k1i"><path d="M884.8 584.6 L879.5 585.9 L874.2 587.0 L868.7 587.9 L863.2 588.7 L857.7 589.4 L852.1 589.9 L846.4 590.3 L840.8 590.5 L835.1 590.5 L829.4 590.4 L823.8 590.2 L818.1 589.8 L812.5 589.2 L807.0 588.5 L801.5 587.6 L796.1 586.6 L790.8 585.5 L785.6 584.2 L780.5 582.8 L775.5 581.2 L770.6 579.5 L765.9 577.6 L761.3 575.7 L756.9 573.6 L752.6 571.4 L748.6 569.1 L744.7 566.6 L741.0 564.1 L737.5 561.5 L734.2 558.7 L731.1 555.9 L728.3 553.0 L725.7 550.1 L723.3 547.1 L721.2 544.0 L719.3 540.8 L717.6 537.6 L716.2 534.4 L715.1 531.1 L714.2 527.8 L713.5 524.5 L713.2 521.1 L713.1 517.8 L713.2 514.4 L713.6 511.1 L714.3 507.8 L715.2 504.5 L716.4 501.2 L717.9 498.0 L719.5 494.8 L721.5 491.6 L723.7 488.5 L726.1 485.5 L728.7 482.5 L731.6 479.6 L734.7 476.8 L738.0 474.1 L741.6 471.5 L745.3 468.9 L749.2 466.5 L753.3 464.2 L757.6 462.0 L762.0 459.9 L766.6 457.9 L771.4 456.1 L776.3 454.4 L781.3 452.8 L786.4 451.4 L791.6 450.1 L797.0 448.9 L802.4 447.9 L807.9 447.0 L813.4 446.3 L819.0 445.8 L824.7 445.3 L830.3 445.1 L836.0 445.0 L841.7 445.0 L847.3 445.2 L853.0 445.6 L858.6 446.1 L864.1 446.8 L869.6 447.6 L875.0 448.6 L880.4 449.7 L885.6 450.9 L890.8 452.3 L895.8 453.8 L900.7 455.5 L905.5 457.3 L910.1 459.2 L914.6 461.3 L918.9 463.4 L923.0 465.7 L927.0 468.1 L930.7 470.6 L934.3 473.2 L937.7 475.9 L940.8 478.7 L943.7 481.6 L946.4 484.5 L948.9 487.5 L951.1 490.6 L953.0 493.7 L954.8 496.9 L956.3 500.1 L957.5 503.4 L958.5 506.7 L959.2 510.0 L959.6 513.3 L959.8 516.7 L959.7 520.0 L959.4 523.4 L958.8 526.7 L958.0 530.0 L956.9 533.3 L955.5 536.5 L953.9 539.8 L952.0 542.9 L949.9 546.0 L988.6 568.8 L991.1 570.3 L993.3 572.0 L995.3 573.8 L997.1 575.6 L998.6 577.6 L999.9 579.6 L1000.9 581.6 L1001.6 583.7 L1002.0 585.8 L1002.1 587.9 L1002.0 590.1 L1001.6 592.2 L1000.9 594.3 L999.9 596.3 L998.6 598.3 L997.1 600.3 L995.3 602.2 L993.3 603.9 L991.1 605.6 L988.6 607.2 L986.0 608.6 L983.1 610.0 L980.1 611.2 L977.0 612.2 L973.7 613.1 L970.3 613.9 L966.8 614.4 L963.3 614.9 L959.7 615.1 L956.1 615.2 L952.5 615.1 L948.9 614.9 L945.3 614.5 L941.8 613.9 L938.5 613.2 L935.2 612.3 L932.0 611.3 L929.0 610.1 L926.2 608.8 L923.5 607.3Z"/></clipPath>
<g clip-path="url(#k1o)">
<path d="M881.5 583.0 L875.7 584.1 L869.8 585.1 L863.8 585.9 L857.8 586.6 L851.7 587.1 L845.6 587.4 L839.4 587.6 L833.3 587.6 L827.2 587.5 L821.1 587.1 L815.0 586.7 L809.0 586.0 L803.0 585.2 L797.1 584.3 L791.2 583.2 L785.5 581.9 L779.9 580.5 L774.3 579.0 L768.9 577.3 L763.7 575.4 L758.5 573.4 L753.6 571.3 L748.8 569.1 L744.2 566.7 L739.7 564.2 L735.5 561.6 L731.5 558.9 L727.6 556.1 L724.0 553.2 L720.7 550.1 L717.5 547.0 L714.6 543.9 L712.0 540.6 L709.5 537.3 L707.4 533.9 L705.5 530.5 L703.9 527.0 L702.5 523.5 L701.4 519.9 L700.6 516.3 L700.0 512.7 L699.8 509.1 L699.8 505.5 L700.0 501.9 L700.6 498.3 L701.4 494.7 L702.5 491.1 L703.9 487.6 L705.5 484.1 L707.4 480.6 L709.6 477.3 L712.0 473.9 L714.6 470.7 L717.5 467.5 L720.7 464.3 L724.1 461.3 L727.7 458.4 L731.5 455.5 L735.5 452.8 L739.8 450.2 L744.2 447.7 L748.8 445.3 L753.6 443.0 L758.6 440.9 L763.7 438.9 L769.0 437.0 L774.4 435.3 L779.9 433.7 L785.5 432.3 L791.3 431.0 L797.1 429.8 L803.0 428.9 L809.0 428.1 L815.0 427.4 L821.1 426.9 L827.2 426.6 L833.3 426.4 L839.5 426.4 L845.6 426.5 L851.7 426.8 L857.8 427.3 L863.8 427.9 L869.8 428.7 L875.7 429.7 L881.6 430.8 L887.3 432.0 L892.9 433.4 L898.5 435.0 L903.9 436.7 L909.1 438.5 L914.3 440.5 L919.2 442.6 L924.0 444.9 L928.6 447.2 L933.1 449.7 L937.3 452.3 L941.4 455.0 L945.2 457.9 L948.8 460.8 L952.2 463.8 L955.3 466.9 L958.2 470.1 L960.9 473.3 L963.3 476.6 L965.5 480.0 L967.4 483.5 L969.0 486.9 L970.4 490.5 L971.5 494.0 L972.3 497.6 L972.8 501.2 L973.1 504.8 L973.1 508.4 L972.8 512.0 L972.3 515.7 L971.5 519.2 L970.4 522.8 L969.0 526.3 L967.4 529.8 L965.5 533.3 L998.1 552.4 L1001.2 554.4 L1004.1 556.6 L1006.7 558.9 L1009.0 561.2 L1010.9 563.7 L1012.6 566.3 L1013.8 569.0 L1014.7 571.7 L1015.3 574.4 L1015.5 577.1 L1015.3 579.9 L1014.7 582.6 L1013.8 585.3 L1012.6 588.0 L1010.9 590.6 L1009.0 593.1 L1006.7 595.5 L1004.1 597.8 L1001.2 599.9 L998.1 601.9 L994.6 603.8 L991.0 605.5 L987.1 607.1 L983.0 608.4 L978.8 609.6 L974.4 610.5 L969.9 611.3 L965.4 611.8 L960.7 612.2 L956.1 612.3 L951.4 612.2 L946.8 611.9 L942.2 611.4 L937.7 610.6 L933.4 609.7 L929.1 608.5 L925.0 607.2 L921.2 605.7 L917.5 604.0 L914.1 602.1Z" fill="url(#gBand2)"/>
<path d="M884.8 584.6 L879.5 585.9 L874.2 587.0 L868.7 587.9 L863.2 588.7 L857.7 589.4 L852.1 589.9 L846.4 590.3 L840.8 590.5 L835.1 590.5 L829.4 590.4 L823.8 590.2 L818.1 589.8 L812.5 589.2 L807.0 588.5 L801.5 587.6 L796.1 586.6 L790.8 585.5 L785.6 584.2 L780.5 582.8 L775.5 581.2 L770.6 579.5 L765.9 577.6 L761.3 575.7 L756.9 573.6 L752.6 571.4 L748.6 569.1 L744.7 566.6 L741.0 564.1 L737.5 561.5 L734.2 558.7 L731.1 555.9 L728.3 553.0 L725.7 550.1 L723.3 547.1 L721.2 544.0 L719.3 540.8 L717.6 537.6 L716.2 534.4 L715.1 531.1 L714.2 527.8 L713.5 524.5 L713.2 521.1 L713.1 517.8 L713.2 514.4 L713.6 511.1 L714.3 507.8 L715.2 504.5 L716.4 501.2 L717.9 498.0 L719.5 494.8 L721.5 491.6 L723.7 488.5 L726.1 485.5 L728.7 482.5 L731.6 479.6 L734.7 476.8 L738.0 474.1 L741.6 471.5 L745.3 468.9 L749.2 466.5 L753.3 464.2 L757.6 462.0 L762.0 459.9 L766.6 457.9 L771.4 456.1 L776.3 454.4 L781.3 452.8 L786.4 451.4 L791.6 450.1 L797.0 448.9 L802.4 447.9 L807.9 447.0 L813.4 446.3 L819.0 445.8 L824.7 445.3 L830.3 445.1 L836.0 445.0 L841.7 445.0 L847.3 445.2 L853.0 445.6 L858.6 446.1 L864.1 446.8 L869.6 447.6 L875.0 448.6 L880.4 449.7 L885.6 450.9 L890.8 452.3 L895.8 453.8 L900.7 455.5 L905.5 457.3 L910.1 459.2 L914.6 461.3 L918.9 463.4 L923.0 465.7 L927.0 468.1 L930.7 470.6 L934.3 473.2 L937.7 475.9 L940.8 478.7 L943.7 481.6 L946.4 484.5 L948.9 487.5 L951.1 490.6 L953.0 493.7 L954.8 496.9 L956.3 500.1 L957.5 503.4 L958.5 506.7 L959.2 510.0 L959.6 513.3 L959.8 516.7 L959.7 520.0 L959.4 523.4 L958.8 526.7 L958.0 530.0 L956.9 533.3 L955.5 536.5 L953.9 539.8 L952.0 542.9 L949.9 546.0 L988.6 568.8 L991.1 570.3 L993.3 572.0 L995.3 573.8 L997.1 575.6 L998.6 577.6 L999.9 579.6 L1000.9 581.6 L1001.6 583.7 L1002.0 585.8 L1002.1 587.9 L1002.0 590.1 L1001.6 592.2 L1000.9 594.3 L999.9 596.3 L998.6 598.3 L997.1 600.3 L995.3 602.2 L993.3 603.9 L991.1 605.6 L988.6 607.2 L986.0 608.6 L983.1 610.0 L980.1 611.2 L977.0 612.2 L973.7 613.1 L970.3 613.9 L966.8 614.4 L963.3 614.9 L959.7 615.1 L956.1 615.2 L952.5 615.1 L948.9 614.9 L945.3 614.5 L941.8 613.9 L938.5 613.2 L935.2 612.3 L932.0 611.3 L929.0 610.1 L926.2 608.8 L923.5 607.3Z" fill="url(#gWall2)"/>
<g clip-path="url(#k1i)"><path d="M884.8 599.0 L879.5 600.3 L874.2 601.4 L868.7 602.3 L863.2 603.1 L857.7 603.8 L852.1 604.3 L846.4 604.7 L840.8 604.9 L835.1 604.9 L829.4 604.8 L823.8 604.6 L818.1 604.2 L812.5 603.6 L807.0 602.9 L801.5 602.1 L796.1 601.0 L790.8 599.9 L785.6 598.6 L780.5 597.2 L775.5 595.6 L770.6 593.9 L765.9 592.0 L761.3 590.1 L756.9 588.0 L752.6 585.8 L748.6 583.5 L744.7 581.0 L741.0 578.5 L737.5 575.9 L734.2 573.1 L731.1 570.3 L728.3 567.5 L725.7 564.5 L723.3 561.5 L721.2 558.4 L719.3 555.2 L717.6 552.0 L716.2 548.8 L715.1 545.5 L714.2 542.2 L713.5 538.9 L713.2 535.5 L713.1 532.2 L713.2 528.8 L713.6 525.5 L714.3 522.2 L715.2 518.9 L716.4 515.6 L717.9 512.4 L719.5 509.2 L721.5 506.0 L723.7 502.9 L726.1 499.9 L728.7 496.9 L731.6 494.0 L734.7 491.2 L738.0 488.5 L741.6 485.9 L745.3 483.3 L749.2 480.9 L753.3 478.6 L757.6 476.4 L762.0 474.3 L766.6 472.3 L771.4 470.5 L776.3 468.8 L781.3 467.2 L786.4 465.8 L791.6 464.5 L797.0 463.3 L802.4 462.3 L807.9 461.4 L813.4 460.7 L819.0 460.2 L824.7 459.8 L830.3 459.5 L836.0 459.4 L841.7 459.4 L847.3 459.7 L853.0 460.0 L858.6 460.5 L864.1 461.2 L869.6 462.0 L875.0 463.0 L880.4 464.1 L885.6 465.3 L890.8 466.7 L895.8 468.2 L900.7 469.9 L905.5 471.7 L910.1 473.6 L914.6 475.7 L918.9 477.8 L923.0 480.1 L927.0 482.5 L930.7 485.0 L934.3 487.6 L937.7 490.3 L940.8 493.1 L943.7 496.0 L946.4 498.9 L948.9 501.9 L951.1 505.0 L953.0 508.1 L954.8 511.3 L956.3 514.5 L957.5 517.8 L958.5 521.1 L959.2 524.4 L959.6 527.7 L959.8 531.1 L959.7 534.4 L959.4 537.8 L958.8 541.1 L958.0 544.4 L956.9 547.7 L955.5 550.9 L953.9 554.2 L952.0 557.3 L949.9 560.4 L988.6 583.2 L991.1 584.7 L993.3 586.4 L995.3 588.2 L997.1 590.0 L998.6 592.0 L999.9 594.0 L1000.9 596.0 L1001.6 598.1 L1002.0 600.2 L1002.1 602.4 L1002.0 604.5 L1001.6 606.6 L1000.9 608.7 L999.9 610.8 L998.6 612.8 L997.1 614.7 L995.3 616.6 L993.3 618.3 L991.1 620.0 L988.6 621.6 L986.0 623.0 L983.1 624.4 L980.1 625.6 L977.0 626.6 L973.7 627.5 L970.3 628.3 L966.8 628.8 L963.3 629.3 L959.7 629.5 L956.1 629.6 L952.5 629.5 L948.9 629.3 L945.3 628.9 L941.8 628.3 L938.5 627.6 L935.2 626.7 L932.0 625.7 L929.0 624.5 L926.2 623.2 L923.5 621.7Z" fill="#222326" stroke="#2a2a2a" stroke-width="0.8"/></g>
<path d="M713.1 517.8 L713.2 514.4 L713.6 511.1 L714.3 507.8 L715.2 504.5 L716.4 501.2 L717.9 498.0 L719.5 494.8 L721.5 491.6 L723.7 488.5 L726.1 485.5 L728.7 482.5 L731.6 479.6 L734.7 476.8 L738.0 474.1 L741.6 471.5 L745.3 468.9 L749.2 466.5 L753.3 464.2 L757.6 462.0 L762.0 459.9 L766.6 457.9 L771.4 456.1 L776.3 454.4 L781.3 452.8 L786.4 451.4 L791.6 450.1 L797.0 448.9 L802.4 447.9 L807.9 447.0 L813.4 446.3 L819.0 445.8 L824.7 445.3 L830.3 445.1 L836.0 445.0 L841.7 445.0 L847.3 445.2 L853.0 445.6 L858.6 446.1 L864.1 446.8 L869.6 447.6 L875.0 448.6 L880.4 449.7 L885.6 450.9 L890.8 452.3 L895.8 453.8 L900.7 455.5 L905.5 457.3 L910.1 459.2 L914.6 461.3 L918.9 463.4 L923.0 465.7 L927.0 468.1 L930.7 470.6 L934.3 473.2 L937.7 475.9 L940.8 478.7 L943.7 481.6 L946.4 484.5 L948.9 487.5 L951.1 490.6 L953.0 493.7 L954.8 496.9 L956.3 500.1 L957.5 503.4 L958.5 506.7 L959.2 510.0 L959.6 513.3 L959.8 516.7 L959.8 531.1 L959.6 527.7 L959.2 524.4 L958.5 521.1 L957.5 517.8 L956.3 514.5 L954.8 511.3 L953.0 508.1 L951.1 505.0 L948.9 501.9 L946.4 498.9 L943.7 496.0 L940.8 493.1 L937.7 490.3 L934.3 487.6 L930.7 485.0 L927.0 482.5 L923.0 480.1 L918.9 477.8 L914.6 475.7 L910.1 473.6 L905.5 471.7 L900.7 469.9 L895.8 468.2 L890.8 466.7 L885.6 465.3 L880.4 464.1 L875.0 463.0 L869.6 462.0 L864.1 461.2 L858.6 460.5 L853.0 460.0 L847.3 459.7 L841.7 459.4 L836.0 459.4 L830.3 459.5 L824.7 459.8 L819.0 460.2 L813.4 460.7 L807.9 461.4 L802.4 462.3 L797.0 463.3 L791.6 464.5 L786.4 465.8 L781.3 467.2 L776.3 468.8 L771.4 470.5 L766.6 472.3 L762.0 474.3 L757.6 476.4 L753.3 478.6 L749.2 480.9 L745.3 483.3 L741.6 485.9 L738.0 488.5 L734.7 491.2 L731.6 494.0 L728.7 496.9 L726.1 499.9 L723.7 502.9 L721.5 506.0 L719.5 509.2 L717.9 512.4 L716.4 515.6 L715.2 518.9 L714.3 522.2 L713.6 525.5 L713.2 528.8 L713.1 532.2Z" fill="url(#gWall2)" stroke="#9a9a9a" stroke-width="0.3"/>
<path d="M949.9 546.0 L988.6 568.8 L991.1 570.3 L993.3 572.0 L995.3 573.8 L997.1 575.6 L998.6 577.6 L999.9 579.6 L1000.9 581.6 L1001.6 583.7 L1002.0 585.8 L1002.1 587.9 L1002.1 602.4 L1002.0 600.2 L1001.6 598.1 L1000.9 596.0 L999.9 594.0 L998.6 592.0 L997.1 590.0 L995.3 588.2 L993.3 586.4 L991.1 584.7 L988.6 583.2 L949.9 560.4Z" fill="url(#gWall2)" stroke="#9a9a9a" stroke-width="0.3"/>
<path d="M699.8 505.5 L700.0 501.9 L700.6 498.3 L701.4 494.7 L702.5 491.1 L703.9 487.6 L705.5 484.1 L707.4 480.6 L709.6 477.3 L712.0 473.9 L714.6 470.7 L717.5 467.5 L720.7 464.3 L724.1 461.3 L727.7 458.4 L731.5 455.5 L735.5 452.8 L739.8 450.2 L744.2 447.7 L748.8 445.3 L753.6 443.0 L758.6 440.9 L763.7 438.9 L769.0 437.0 L774.4 435.3 L779.9 433.7 L785.5 432.3 L791.3 431.0 L797.1 429.8 L803.0 428.9 L809.0 428.1 L815.0 427.4 L821.1 426.9 L827.2 426.6 L833.3 426.4 L839.5 426.4 L845.6 426.5 L851.7 426.8 L857.8 427.3 L863.8 427.9 L869.8 428.7 L875.7 429.7 L881.6 430.8 L887.3 432.0 L892.9 433.4 L898.5 435.0 L903.9 436.7 L909.1 438.5 L914.3 440.5 L919.2 442.6 L924.0 444.9 L928.6 447.2 L933.1 449.7 L937.3 452.3 L941.4 455.0 L945.2 457.9 L948.8 460.8 L952.2 463.8 L955.3 466.9 L958.2 470.1 L960.9 473.3 L963.3 476.6 L965.5 480.0 L967.4 483.5 L969.0 486.9 L970.4 490.5 L971.5 494.0 L972.3 497.6 L972.8 501.2 L959.8 516.7 L959.6 513.3 L959.2 510.0 L958.5 506.7 L957.5 503.4 L956.3 500.1 L954.8 496.9 L953.0 493.7 L951.1 490.6 L948.9 487.5 L946.4 484.5 L943.7 481.6 L940.8 478.7 L937.7 475.9 L934.3 473.2 L930.7 470.6 L927.0 468.1 L923.0 465.7 L918.9 463.4 L914.6 461.3 L910.1 459.2 L905.5 457.3 L900.7 455.5 L895.8 453.8 L890.8 452.3 L885.6 450.9 L880.4 449.7 L875.0 448.6 L869.6 447.6 L864.1 446.8 L858.6 446.1 L853.0 445.6 L847.3 445.2 L841.7 445.0 L836.0 445.0 L830.3 445.1 L824.7 445.3 L819.0 445.8 L813.4 446.3 L807.9 447.0 L802.4 447.9 L797.0 448.9 L791.6 450.1 L786.4 451.4 L781.3 452.8 L776.3 454.4 L771.4 456.1 L766.6 457.9 L762.0 459.9 L757.6 462.0 L753.3 464.2 L749.2 466.5 L745.3 468.9 L741.6 471.5 L738.0 474.1 L734.7 476.8 L731.6 479.6 L728.7 482.5 L726.1 485.5 L723.7 488.5 L721.5 491.6 L719.5 494.8 L717.9 498.0 L716.4 501.2 L715.2 504.5 L714.3 507.8 L713.6 511.1 L713.2 514.4 L713.1 517.8Z" fill="url(#gBand2)"/>
<path d="M965.5 533.3 L998.1 552.4 L1001.2 554.4 L1004.1 556.6 L1006.7 558.9 L1009.0 561.2 L1010.9 563.7 L1012.6 566.3 L1013.8 569.0 L1014.7 571.7 L1015.3 574.4 L1015.5 577.1 L1002.1 587.9 L1002.0 585.8 L1001.6 583.7 L1000.9 581.6 L999.9 579.6 L998.6 577.6 L997.1 575.6 L995.3 573.8 L993.3 572.0 L991.1 570.3 L988.6 568.8 L949.9 546.0Z" fill="url(#gBand2)"/>
<path d="M713.1 517.8 L713.2 514.4 L713.6 511.1 L714.3 507.8 L715.2 504.5 L716.4 501.2 L717.9 498.0 L719.5 494.8 L721.5 491.6 L723.7 488.5 L726.1 485.5 L728.7 482.5 L731.6 479.6 L734.7 476.8 L738.0 474.1 L741.6 471.5 L745.3 468.9 L749.2 466.5 L753.3 464.2 L757.6 462.0 L762.0 459.9 L766.6 457.9 L771.4 456.1 L776.3 454.4 L781.3 452.8 L786.4 451.4 L791.6 450.1 L797.0 448.9 L802.4 447.9 L807.9 447.0 L813.4 446.3 L819.0 445.8 L824.7 445.3 L830.3 445.1 L836.0 445.0 L841.7 445.0 L847.3 445.2 L853.0 445.6 L858.6 446.1 L864.1 446.8 L869.6 447.6 L875.0 448.6 L880.4 449.7 L885.6 450.9 L890.8 452.3 L895.8 453.8 L900.7 455.5 L905.5 457.3 L910.1 459.2 L914.6 461.3 L918.9 463.4 L923.0 465.7 L927.0 468.1 L930.7 470.6 L934.3 473.2 L937.7 475.9 L940.8 478.7 L943.7 481.6 L946.4 484.5 L948.9 487.5 L951.1 490.6 L953.0 493.7 L954.8 496.9 L956.3 500.1 L957.5 503.4 L958.5 506.7 L959.2 510.0 L959.6 513.3 L959.8 516.7" fill="none" stroke="#3c3c3c" stroke-width="0.8"/>
<path d="M713.1 532.2 L713.2 528.8 L713.6 525.5 L714.3 522.2 L715.2 518.9 L716.4 515.6 L717.9 512.4 L719.5 509.2 L721.5 506.0 L723.7 502.9 L726.1 499.9 L728.7 496.9 L731.6 494.0 L734.7 491.2 L738.0 488.5 L741.6 485.9 L745.3 483.3 L749.2 480.9 L753.3 478.6 L757.6 476.4 L762.0 474.3 L766.6 472.3 L771.4 470.5 L776.3 468.8 L781.3 467.2 L786.4 465.8 L791.6 464.5 L797.0 463.3 L802.4 462.3 L807.9 461.4 L813.4 460.7 L819.0 460.2 L824.7 459.8 L830.3 459.5 L836.0 459.4 L841.7 459.4 L847.3 459.7 L853.0 460.0 L858.6 460.5 L864.1 461.2 L869.6 462.0 L875.0 463.0 L880.4 464.1 L885.6 465.3 L890.8 466.7 L895.8 468.2 L900.7 469.9 L905.5 471.7 L910.1 473.6 L914.6 475.7 L918.9 477.8 L923.0 480.1 L927.0 482.5 L930.7 485.0 L934.3 487.6 L937.7 490.3 L940.8 493.1 L943.7 496.0 L946.4 498.9 L948.9 501.9 L951.1 505.0 L953.0 508.1 L954.8 511.3 L956.3 514.5 L957.5 517.8 L958.5 521.1 L959.2 524.4 L959.6 527.7 L959.8 531.1" fill="none" stroke="#2c2c2c" stroke-width="0.8"/>
<path d="M949.9 546.0 L988.6 568.8 L991.1 570.3 L993.3 572.0 L995.3 573.8 L997.1 575.6 L998.6 577.6 L999.9 579.6 L1000.9 581.6 L1001.6 583.7 L1002.0 585.8 L1002.1 587.9" fill="none" stroke="#3c3c3c" stroke-width="0.8"/>
<path d="M949.9 560.4 L988.6 583.2 L991.1 584.7 L993.3 586.4 L995.3 588.2 L997.1 590.0 L998.6 592.0 L999.9 594.0 L1000.9 596.0 L1001.6 598.1 L1002.0 600.2 L1002.1 602.4" fill="none" stroke="#2c2c2c" stroke-width="0.8"/>
<line x1="949.9" y1="546.0" x2="949.9" y2="560.4" stroke="#3c3c3c" stroke-width="0.8"/>
<line x1="965.5" y1="533.3" x2="949.9" y2="546.0" stroke="#4a4a4a" stroke-width="0.7"/>
<line x1="988.6" y1="568.8" x2="988.6" y2="583.2" stroke="#3c3c3c" stroke-width="0.8"/>
<line x1="998.1" y1="552.4" x2="988.6" y2="568.8" stroke="#4a4a4a" stroke-width="0.7"/>
</g>
<path d="M881.5 583.0 L875.7 584.1 L869.8 585.1 L863.8 585.9 L857.8 586.6 L851.7 587.1 L845.6 587.4 L839.4 587.6 L833.3 587.6 L827.2 587.5 L821.1 587.1 L815.0 586.7 L809.0 586.0 L803.0 585.2 L797.1 584.3 L791.2 583.2 L785.5 581.9 L779.9 580.5 L774.3 579.0 L768.9 577.3 L763.7 575.4 L758.5 573.4 L753.6 571.3 L748.8 569.1 L744.2 566.7 L739.7 564.2 L735.5 561.6 L731.5 558.9 L727.6 556.1 L724.0 553.2 L720.7 550.1 L717.5 547.0 L714.6 543.9 L712.0 540.6 L709.5 537.3 L707.4 533.9 L705.5 530.5 L703.9 527.0 L702.5 523.5 L701.4 519.9 L700.6 516.3 L700.0 512.7 L699.8 509.1 L699.8 505.5 L700.0 501.9 L700.6 498.3 L701.4 494.7 L702.5 491.1 L703.9 487.6 L705.5 484.1 L707.4 480.6 L709.6 477.3 L712.0 473.9 L714.6 470.7 L717.5 467.5 L720.7 464.3 L724.1 461.3 L727.7 458.4 L731.5 455.5 L735.5 452.8 L739.8 450.2 L744.2 447.7 L748.8 445.3 L753.6 443.0 L758.6 440.9 L763.7 438.9 L769.0 437.0 L774.4 435.3 L779.9 433.7 L785.5 432.3 L791.3 431.0 L797.1 429.8 L803.0 428.9 L809.0 428.1 L815.0 427.4 L821.1 426.9 L827.2 426.6 L833.3 426.4 L839.5 426.4 L845.6 426.5 L851.7 426.8 L857.8 427.3 L863.8 427.9 L869.8 428.7 L875.7 429.7 L881.6 430.8 L887.3 432.0 L892.9 433.4 L898.5 435.0 L903.9 436.7 L909.1 438.5 L914.3 440.5 L919.2 442.6 L924.0 444.9 L928.6 447.2 L933.1 449.7 L937.3 452.3 L941.4 455.0 L945.2 457.9 L948.8 460.8 L952.2 463.8 L955.3 466.9 L958.2 470.1 L960.9 473.3 L963.3 476.6 L965.5 480.0 L967.4 483.5 L969.0 486.9 L970.4 490.5 L971.5 494.0 L972.3 497.6 L972.8 501.2 L973.1 504.8 L973.1 508.4 L972.8 512.0 L972.3 515.7 L971.5 519.2 L970.4 522.8 L969.0 526.3 L967.4 529.8 L965.5 533.3 L998.1 552.4 L1001.2 554.4 L1004.1 556.6 L1006.7 558.9 L1009.0 561.2 L1010.9 563.7 L1012.6 566.3 L1013.8 569.0 L1014.7 571.7 L1015.3 574.4 L1015.5 577.1 L1015.3 579.9 L1014.7 582.6 L1013.8 585.3 L1012.6 588.0 L1010.9 590.6 L1009.0 593.1 L1006.7 595.5 L1004.1 597.8 L1001.2 599.9 L998.1 601.9 L994.6 603.8 L991.0 605.5 L987.1 607.1 L983.0 608.4 L978.8 609.6 L974.4 610.5 L969.9 611.3 L965.4 611.8 L960.7 612.2 L956.1 612.3 L951.4 612.2 L946.8 611.9 L942.2 611.4 L937.7 610.6 L933.4 609.7 L929.1 608.5 L925.0 607.2 L921.2 605.7 L917.5 604.0 L914.1 602.1Z" fill="none" stroke="#3e3e3e" stroke-width="1"/>
<clipPath id="pko"><path d="M639.2 441.6 L636.0 443.2 L632.4 444.5 L628.5 445.5 L624.5 446.1 L620.3 446.3 L616.1 446.1 L612.1 445.5 L608.2 444.6 L604.6 443.3 L601.5 441.7 L563.7 419.6 L561.0 417.7 L558.8 415.6 L557.2 413.3 L556.3 410.9 L555.9 408.5 L556.3 406.0 L557.2 403.6 L558.8 401.3 L561.0 399.2 L563.7 397.3 L649.4 346.6 L652.6 345.0 L656.2 343.7 L660.1 342.7 L664.1 342.1 L668.3 341.9 L672.5 342.1 L676.5 342.7 L680.4 343.6 L684.0 344.9 L687.1 346.5 L724.9 368.6 L727.6 370.5 L729.8 372.6 L731.4 374.9 L732.3 377.3 L732.7 379.7 L732.3 382.2 L731.4 384.6 L729.8 386.9 L727.6 389.0 L724.9 390.9Z"/></clipPath><clipPath id="pki"><path d="M637.9 442.3 L634.9 443.8 L631.6 445.1 L628.0 445.9 L624.2 446.5 L620.3 446.7 L616.4 446.5 L612.6 446.0 L609.0 445.1 L605.7 443.9 L602.7 442.4 L565.0 420.3 L562.5 418.5 L560.5 416.6 L559.0 414.5 L558.1 412.2 L557.8 409.9 L558.1 407.6 L559.0 405.4 L560.5 403.3 L562.5 401.3 L565.0 399.5 L650.7 348.8 L653.7 347.3 L657.0 346.1 L660.6 345.2 L664.4 344.7 L668.3 344.5 L672.2 344.6 L676.0 345.2 L679.6 346.0 L682.9 347.2 L685.9 348.7 L723.6 370.9 L726.1 372.6 L728.1 374.6 L729.6 376.7 L730.5 378.9 L730.8 381.2 L730.5 383.5 L729.6 385.7 L728.1 387.9 L726.1 389.8 L723.6 391.6Z"/></clipPath>
<g clip-path="url(#pko)">
<path d="M639.2 441.6 L636.0 443.2 L632.4 444.5 L628.5 445.5 L624.5 446.1 L620.3 446.3 L616.1 446.1 L612.1 445.5 L608.2 444.6 L604.6 443.3 L601.5 441.7 L563.7 419.6 L561.0 417.7 L558.8 415.6 L557.2 413.3 L556.3 410.9 L555.9 408.5 L556.3 406.0 L557.2 403.6 L558.8 401.3 L561.0 399.2 L563.7 397.3 L649.4 346.6 L652.6 345.0 L656.2 343.7 L660.1 342.7 L664.1 342.1 L668.3 341.9 L672.5 342.1 L676.5 342.7 L680.4 343.6 L684.0 344.9 L687.1 346.5 L724.9 368.6 L727.6 370.5 L729.8 372.6 L731.4 374.9 L732.3 377.3 L732.7 379.7 L732.3 382.2 L731.4 384.6 L729.8 386.9 L727.6 389.0 L724.9 390.9Z" fill="#f2f2f2"/>
<path d="M637.9 442.3 L634.9 443.8 L631.6 445.1 L628.0 445.9 L624.2 446.5 L620.3 446.7 L616.4 446.5 L612.6 446.0 L609.0 445.1 L605.7 443.9 L602.7 442.4 L565.0 420.3 L562.5 418.5 L560.5 416.6 L559.0 414.5 L558.1 412.2 L557.8 409.9 L558.1 407.6 L559.0 405.4 L560.5 403.3 L562.5 401.3 L565.0 399.5 L650.7 348.8 L653.7 347.3 L657.0 346.1 L660.6 345.2 L664.4 344.7 L668.3 344.5 L672.2 344.6 L676.0 345.2 L679.6 346.0 L682.9 347.2 L685.9 348.7 L723.6 370.9 L726.1 372.6 L728.1 374.6 L729.6 376.7 L730.5 378.9 L730.8 381.2 L730.5 383.5 L729.6 385.7 L728.1 387.9 L726.1 389.8 L723.6 391.6Z" fill="url(#gPock)" stroke="#3c3c3c" stroke-width="0.8"/>
<line x1="637.9" y1="442.3" x2="637.9" y2="466.1" stroke="#444" stroke-width="0.7"/>
<line x1="602.7" y1="442.4" x2="602.7" y2="466.1" stroke="#444" stroke-width="0.7"/>
<line x1="565.0" y1="420.3" x2="565.0" y2="444.0" stroke="#444" stroke-width="0.7"/>
<line x1="565.0" y1="399.5" x2="565.0" y2="423.3" stroke="#444" stroke-width="0.7"/>
<line x1="650.7" y1="348.8" x2="650.7" y2="372.5" stroke="#444" stroke-width="0.7"/>
<line x1="685.9" y1="348.7" x2="685.9" y2="372.4" stroke="#444" stroke-width="0.7"/>
<line x1="723.6" y1="370.9" x2="723.6" y2="394.6" stroke="#444" stroke-width="0.7"/>
<line x1="723.6" y1="391.6" x2="723.6" y2="415.3" stroke="#444" stroke-width="0.7"/>
<g clip-path="url(#pki)"><path d="M637.9 466.1 L634.9 467.6 L631.6 468.8 L628.0 469.7 L624.2 470.2 L620.3 470.4 L616.4 470.2 L612.6 469.7 L609.0 468.8 L605.7 467.6 L602.7 466.1 L565.0 444.0 L562.5 442.2 L560.5 440.3 L559.0 438.2 L558.1 435.9 L557.8 433.6 L558.1 431.3 L559.0 429.1 L560.5 427.0 L562.5 425.0 L565.0 423.3 L650.7 372.5 L653.7 371.0 L657.0 369.8 L660.6 368.9 L664.4 368.4 L668.3 368.2 L672.2 368.4 L676.0 368.9 L679.6 369.7 L682.9 370.9 L685.9 372.4 L723.6 394.6 L726.1 396.3 L728.1 398.3 L729.6 400.4 L730.5 402.6 L730.8 404.9 L730.5 407.2 L729.6 409.5 L728.1 411.6 L726.1 413.6 L723.6 415.3Z" fill="#222326"/></g>
</g>
<path d="M639.2 441.6 L636.0 443.2 L632.4 444.5 L628.5 445.5 L624.5 446.1 L620.3 446.3 L616.1 446.1 L612.1 445.5 L608.2 444.6 L604.6 443.3 L601.5 441.7 L563.7 419.6 L561.0 417.7 L558.8 415.6 L557.2 413.3 L556.3 410.9 L555.9 408.5 L556.3 406.0 L557.2 403.6 L558.8 401.3 L561.0 399.2 L563.7 397.3 L649.4 346.6 L652.6 345.0 L656.2 343.7 L660.1 342.7 L664.1 342.1 L668.3 341.9 L672.5 342.1 L676.5 342.7 L680.4 343.6 L684.0 344.9 L687.1 346.5 L724.9 368.6 L727.6 370.5 L729.8 372.6 L731.4 374.9 L732.3 377.3 L732.7 379.7 L732.3 382.2 L731.4 384.6 L729.8 386.9 L727.6 389.0 L724.9 390.9Z" fill="none" stroke="#4a4a4a" stroke-width="0.8"/>
<clipPath id="mo0"><ellipse cx="836.2" cy="356.0" rx="33.8" ry="19.9"/></clipPath>
<clipPath id="mi0"><ellipse cx="836.2" cy="357.8" rx="31.6" ry="18.7"/></clipPath>
<g clip-path="url(#mo0)">
<ellipse cx="836.2" cy="356.0" rx="33.8" ry="19.9" fill="url(#gHoleB)"/>
<g transform="translate(836.2 356.0)"><ellipse cx="0" cy="1.8" rx="31.6" ry="18.7" fill="url(#gHole)" stroke="#3c3c3c" stroke-width="0.8"/><ellipse cx="0" cy="1.8" rx="31.6" ry="18.7" fill="url(#gHoleV)"/></g>
<line x1="814.1" y1="344.4" x2="814.1" y2="370.0" stroke="#2c2c2c" stroke-width="0.8"/>
<g clip-path="url(#mi0)"><ellipse cx="836.2" cy="381.2" rx="31.6" ry="18.7" fill="#222326"/></g>
</g>
<ellipse cx="836.2" cy="356.0" rx="33.8" ry="19.9" fill="none" stroke="#4a4a4a" stroke-width="0.9"/>
<clipPath id="mo1"><ellipse cx="579.8" cy="506.3" rx="33.8" ry="19.9"/></clipPath>
<clipPath id="mi1"><ellipse cx="579.8" cy="508.1" rx="31.6" ry="18.7"/></clipPath>
<g clip-path="url(#mo1)">
<ellipse cx="579.8" cy="506.3" rx="33.8" ry="19.9" fill="url(#gHoleB)"/>
<g transform="translate(579.8 506.3)"><ellipse cx="0" cy="1.8" rx="31.6" ry="18.7" fill="url(#gHole)" stroke="#3c3c3c" stroke-width="0.8"/><ellipse cx="0" cy="1.8" rx="31.6" ry="18.7" fill="url(#gHoleV)"/></g>
<line x1="557.7" y1="494.7" x2="557.7" y2="520.3" stroke="#2c2c2c" stroke-width="0.8"/>
<g clip-path="url(#mi1)"><ellipse cx="579.8" cy="531.5" rx="31.6" ry="18.7" fill="#222326"/></g>
</g>
<ellipse cx="579.8" cy="506.3" rx="33.8" ry="19.9" fill="none" stroke="#4a4a4a" stroke-width="0.9"/>
<clipPath id="mo2"><ellipse cx="837.0" cy="657.8" rx="33.8" ry="19.9"/></clipPath>
<clipPath id="mi2"><ellipse cx="837.0" cy="659.6" rx="31.6" ry="18.7"/></clipPath>
<g clip-path="url(#mo2)">
<ellipse cx="837.0" cy="657.8" rx="33.8" ry="19.9" fill="url(#gHoleB)"/>
<g transform="translate(837.0 657.8)"><ellipse cx="0" cy="1.8" rx="31.6" ry="18.7" fill="url(#gHole)" stroke="#3c3c3c" stroke-width="0.8"/><ellipse cx="0" cy="1.8" rx="31.6" ry="18.7" fill="url(#gHoleV)"/></g>
<line x1="814.9" y1="646.2" x2="814.9" y2="671.8" stroke="#2c2c2c" stroke-width="0.8"/>
<g clip-path="url(#mi2)"><ellipse cx="837.0" cy="683.0" rx="31.6" ry="18.7" fill="#222326"/></g>
</g>
<ellipse cx="837.0" cy="657.8" rx="33.8" ry="19.9" fill="none" stroke="#4a4a4a" stroke-width="0.9"/>
<g id="holes">
<ellipse cx="451.8" cy="190.0" rx="13.1" ry="7.6" fill="#808080" stroke="#383838" stroke-width="0.9"/>
<ellipse cx="451.8" cy="191.3" rx="9.9" ry="5.5" fill="url(#gSm)" stroke="#2a2a2a" stroke-width="0.7"/>
<line x1="451.8" y1="190.0" x2="451.8" y2="197.0" stroke="#1d5fb0" stroke-width="1.1"/>
<line x1="451.8" y1="185.0" x2="451.8" y2="190.0" stroke="#9c8622" stroke-width="1.1" stroke-opacity="0.7"/>
<ellipse cx="297.7" cy="280.7" rx="13.1" ry="7.6" fill="#808080" stroke="#383838" stroke-width="0.9"/>
<ellipse cx="297.7" cy="282.0" rx="9.9" ry="5.5" fill="url(#gSm)" stroke="#2a2a2a" stroke-width="0.7"/>
<line x1="297.7" y1="280.7" x2="297.7" y2="287.7" stroke="#1d5fb0" stroke-width="1.1"/>
<line x1="297.7" y1="275.7" x2="297.7" y2="280.7" stroke="#9c8622" stroke-width="1.1" stroke-opacity="0.7"/>
<ellipse cx="606.1" cy="280.7" rx="13.1" ry="7.6" fill="#808080" stroke="#383838" stroke-width="0.9"/>
<ellipse cx="606.1" cy="282.0" rx="9.9" ry="5.5" fill="url(#gSm)" stroke="#2a2a2a" stroke-width="0.7"/>
<line x1="606.1" y1="280.7" x2="606.1" y2="287.7" stroke="#1d5fb0" stroke-width="1.1"/>
<line x1="606.1" y1="275.7" x2="606.1" y2="280.7" stroke="#9c8622" stroke-width="1.1" stroke-opacity="0.7"/>
<ellipse cx="451.8" cy="371.6" rx="13.1" ry="7.6" fill="#808080" stroke="#383838" stroke-width="0.9"/>
<ellipse cx="451.8" cy="372.9" rx="9.9" ry="5.5" fill="url(#gSm)" stroke="#2a2a2a" stroke-width="0.7"/>
<line x1="451.8" y1="371.6" x2="451.8" y2="378.6" stroke="#1d5fb0" stroke-width="1.1"/>
<line x1="451.8" y1="366.6" x2="451.8" y2="371.6" stroke="#9c8622" stroke-width="1.1" stroke-opacity="0.7"/>
<ellipse cx="880.4" cy="330.3" rx="13.1" ry="7.6" fill="#808080" stroke="#383838" stroke-width="0.9"/>
<ellipse cx="880.4" cy="331.6" rx="9.9" ry="5.5" fill="url(#gSm)" stroke="#2a2a2a" stroke-width="0.7"/>
<line x1="880.4" y1="330.3" x2="880.4" y2="337.3" stroke="#1d5fb0" stroke-width="1.1"/>
<line x1="880.4" y1="325.3" x2="880.4" y2="330.3" stroke="#9c8622" stroke-width="1.1" stroke-opacity="0.7"/>
<ellipse cx="792.5" cy="382.5" rx="13.1" ry="7.6" fill="#808080" stroke="#383838" stroke-width="0.9"/>
<ellipse cx="792.5" cy="383.8" rx="9.9" ry="5.5" fill="url(#gSm)" stroke="#2a2a2a" stroke-width="0.7"/>
<line x1="792.5" y1="382.5" x2="792.5" y2="389.5" stroke="#1d5fb0" stroke-width="1.1"/>
<line x1="792.5" y1="377.5" x2="792.5" y2="382.5" stroke="#9c8622" stroke-width="1.1" stroke-opacity="0.7"/>
<ellipse cx="836.0" cy="416.5" rx="13.1" ry="7.6" fill="#808080" stroke="#383838" stroke-width="0.9"/>
<ellipse cx="836.0" cy="417.8" rx="9.9" ry="5.5" fill="url(#gSm)" stroke="#2a2a2a" stroke-width="0.7"/>
<line x1="836.0" y1="416.5" x2="836.0" y2="423.5" stroke="#1d5fb0" stroke-width="1.1"/>
<line x1="836.0" y1="411.5" x2="836.0" y2="416.5" stroke="#9c8622" stroke-width="1.1" stroke-opacity="0.7"/>
<ellipse cx="623.6" cy="480.7" rx="13.1" ry="7.6" fill="#808080" stroke="#383838" stroke-width="0.9"/>
<ellipse cx="623.6" cy="482.0" rx="9.9" ry="5.5" fill="url(#gSm)" stroke="#2a2a2a" stroke-width="0.7"/>
<line x1="623.6" y1="480.7" x2="623.6" y2="487.7" stroke="#1d5fb0" stroke-width="1.1"/>
<line x1="623.6" y1="475.7" x2="623.6" y2="480.7" stroke="#9c8622" stroke-width="1.1" stroke-opacity="0.7"/>
<ellipse cx="682.4" cy="506.3" rx="13.1" ry="7.6" fill="#808080" stroke="#383838" stroke-width="0.9"/>
<ellipse cx="682.4" cy="507.6" rx="9.9" ry="5.5" fill="url(#gSm)" stroke="#2a2a2a" stroke-width="0.7"/>
<line x1="682.4" y1="506.3" x2="682.4" y2="513.3" stroke="#1d5fb0" stroke-width="1.1"/>
<line x1="682.4" y1="501.3" x2="682.4" y2="506.3" stroke="#9c8622" stroke-width="1.1" stroke-opacity="0.7"/>
<ellipse cx="536.1" cy="532.9" rx="13.1" ry="7.6" fill="#808080" stroke="#383838" stroke-width="0.9"/>
<ellipse cx="536.1" cy="534.2" rx="9.9" ry="5.5" fill="url(#gSm)" stroke="#2a2a2a" stroke-width="0.7"/>
<line x1="536.1" y1="532.9" x2="536.1" y2="539.9" stroke="#1d5fb0" stroke-width="1.1"/>
<line x1="536.1" y1="527.9" x2="536.1" y2="532.9" stroke="#9c8622" stroke-width="1.1" stroke-opacity="0.7"/>
<ellipse cx="991.0" cy="507.0" rx="13.1" ry="7.6" fill="#808080" stroke="#383838" stroke-width="0.9"/>
<ellipse cx="991.0" cy="508.3" rx="9.9" ry="5.5" fill="url(#gSm)" stroke="#2a2a2a" stroke-width="0.7"/>
<line x1="991.0" y1="507.0" x2="991.0" y2="514.0" stroke="#1d5fb0" stroke-width="1.1"/>
<line x1="991.0" y1="502.0" x2="991.0" y2="507.0" stroke="#9c8622" stroke-width="1.1" stroke-opacity="0.7"/>
<ellipse cx="836.6" cy="598.0" rx="13.1" ry="7.6" fill="#808080" stroke="#383838" stroke-width="0.9"/>
<ellipse cx="836.6" cy="599.3" rx="9.9" ry="5.5" fill="url(#gSm)" stroke="#2a2a2a" stroke-width="0.7"/>
<line x1="836.6" y1="598.0" x2="836.6" y2="605.0" stroke="#1d5fb0" stroke-width="1.1"/>
<line x1="836.6" y1="593.0" x2="836.6" y2="598.0" stroke="#9c8622" stroke-width="1.1" stroke-opacity="0.7"/>
<ellipse cx="879.9" cy="631.6" rx="13.1" ry="7.6" fill="#808080" stroke="#383838" stroke-width="0.9"/>
<ellipse cx="879.9" cy="632.9" rx="9.9" ry="5.5" fill="url(#gSm)" stroke="#2a2a2a" stroke-width="0.7"/>
<line x1="879.9" y1="631.6" x2="879.9" y2="638.6" stroke="#1d5fb0" stroke-width="1.1"/>
<line x1="879.9" y1="626.6" x2="879.9" y2="631.6" stroke="#9c8622" stroke-width="1.1" stroke-opacity="0.7"/>
<ellipse cx="792.7" cy="683.0" rx="13.1" ry="7.6" fill="#808080" stroke="#383838" stroke-width="0.9"/>
<ellipse cx="792.7" cy="684.3" rx="9.9" ry="5.5" fill="url(#gSm)" stroke="#2a2a2a" stroke-width="0.7"/>
<line x1="792.7" y1="683.0" x2="792.7" y2="690.0" stroke="#1d5fb0" stroke-width="1.1"/>
<line x1="792.7" y1="678.0" x2="792.7" y2="683.0" stroke="#9c8622" stroke-width="1.1" stroke-opacity="0.7"/>
</g>
<g fill="none" stroke="#3fd04a" stroke-width="1.2" stroke-opacity="0.85">
<ellipse cx="451.8" cy="190.0" rx="10.9" ry="6.3"/>
<ellipse cx="451.8" cy="217.6" rx="10.9" ry="6.3"/>
<path d="M440.9 190.0v27.6M462.7 190.0v27.6"/>
<ellipse cx="297.7" cy="280.7" rx="10.9" ry="6.3"/>
<ellipse cx="297.7" cy="308.3" rx="10.9" ry="6.3"/>
<path d="M286.8 280.7v27.6M308.6 280.7v27.6"/>
<ellipse cx="606.1" cy="280.7" rx="10.9" ry="6.3"/>
<ellipse cx="606.1" cy="308.3" rx="10.9" ry="6.3"/>
<path d="M595.2 280.7v27.6M617.0 280.7v27.6"/>
<ellipse cx="451.8" cy="371.6" rx="10.9" ry="6.3"/>
<ellipse cx="451.8" cy="399.2" rx="10.9" ry="6.3"/>
<path d="M440.9 371.6v27.6M462.7 371.6v27.6"/>
<ellipse cx="880.4" cy="330.3" rx="10.9" ry="6.3"/>
<ellipse cx="880.4" cy="357.9" rx="10.9" ry="6.3"/>
<path d="M869.5 330.3v27.6M891.3 330.3v27.6"/>
<ellipse cx="792.5" cy="382.5" rx="10.9" ry="6.3"/>
<ellipse cx="792.5" cy="410.1" rx="10.9" ry="6.3"/>
<path d="M781.6 382.5v27.6M803.4 382.5v27.6"/>
<ellipse cx="836.0" cy="416.5" rx="10.9" ry="6.3"/>
<ellipse cx="836.0" cy="444.1" rx="10.9" ry="6.3"/>
<path d="M825.1 416.5v27.6M846.9 416.5v27.6"/>
<ellipse cx="623.6" cy="480.7" rx="10.9" ry="6.3"/>
<ellipse cx="623.6" cy="508.3" rx="10.9" ry="6.3"/>
<path d="M612.7 480.7v27.6M634.5 480.7v27.6"/>
<ellipse cx="682.4" cy="506.3" rx="10.9" ry="6.3"/>
<ellipse cx="682.4" cy="533.9" rx="10.9" ry="6.3"/>
<path d="M671.5 506.3v27.6M693.3 506.3v27.6"/>
<ellipse cx="536.1" cy="532.9" rx="10.9" ry="6.3"/>
<ellipse cx="536.1" cy="560.5" rx="10.9" ry="6.3"/>
<path d="M525.2 532.9v27.6M547.0 532.9v27.6"/>
<ellipse cx="991.0" cy="507.0" rx="10.9" ry="6.3"/>
<ellipse cx="991.0" cy="534.6" rx="10.9" ry="6.3"/>
<path d="M980.1 507.0v27.6M1001.9 507.0v27.6"/>
<ellipse cx="836.6" cy="598.0" rx="10.9" ry="6.3"/>
<ellipse cx="836.6" cy="625.6" rx="10.9" ry="6.3"/>
<path d="M825.7 598.0v27.6M847.5 598.0v27.6"/>
<ellipse cx="879.9" cy="631.6" rx="10.9" ry="6.3"/>
<ellipse cx="879.9" cy="659.2" rx="10.9" ry="6.3"/>
<path d="M869.0 631.6v27.6M890.8 631.6v27.6"/>
<ellipse cx="792.7" cy="683.0" rx="10.9" ry="6.3"/>
<ellipse cx="792.7" cy="710.6" rx="10.9" ry="6.3"/>
<path d="M781.8 683.0v27.6M803.6 683.0v27.6"/>
</g>
<g fill="#12f51c">
<path d="M451.8 172.0l2.6 7.2v3h-5.2v-3z"/>
<path d="M297.7 262.7l2.6 7.2v3h-5.2v-3z"/>
<path d="M606.1 262.7l2.6 7.2v3h-5.2v-3z"/>
<path d="M451.8 353.6l2.6 7.2v3h-5.2v-3z"/>
<path d="M880.4 312.3l2.6 7.2v3h-5.2v-3z"/>
<path d="M792.5 364.5l2.6 7.2v3h-5.2v-3z"/>
<path d="M836.0 398.5l2.6 7.2v3h-5.2v-3z"/>
<path d="M623.6 462.7l2.6 7.2v3h-5.2v-3z"/>
<path d="M682.4 488.3l2.6 7.2v3h-5.2v-3z"/>
<path d="M536.1 514.9l2.6 7.2v3h-5.2v-3z"/>
<path d="M991.0 489.0l2.6 7.2v3h-5.2v-3z"/>
<path d="M836.6 580.0l2.6 7.2v3h-5.2v-3z"/>
<path d="M879.9 613.6l2.6 7.2v3h-5.2v-3z"/>
<path d="M792.7 665.0l2.6 7.2v3h-5.2v-3z"/>
</g>
<g fill="none" stroke="#ea1822" stroke-opacity="0.75" stroke-width="1.7" stroke-dasharray="3 2.1">
<path d="M437.3 62L425.3 206"/>
<path d="M452 62V173"/>
<path d="M451.8 148.5 L297.7 239.2 L451.8 330.1 L606.1 239.2 L880.4 288.8 L792.5 341.0 L836.0 375.0 L682.4 464.8 L623.6 439.2 L536.1 491.4 L792.7 641.5 L879.9 590.1 L836.6 556.5 L991.0 465.5"/>
<path d="M991.0 465.5L1030 483"/>
<path d="M297.7 239.2V263.2"/>
<path d="M606.1 239.2V263.2"/>
<path d="M451.8 330.1V354.1"/>
<path d="M880.4 288.8V312.8"/>
<path d="M792.5 341.0V365.0"/>
<path d="M836.0 375.0V399.0"/>
<path d="M623.6 439.2V463.2"/>
<path d="M682.4 464.8V488.8"/>
<path d="M536.1 491.4V515.4"/>
<path d="M991.0 465.5V489.5"/>
<path d="M836.6 556.5V580.5"/>
<path d="M879.9 590.1V614.1"/>
<path d="M792.7 641.5V665.5"/>
</g>
<g stroke-width="0.8">
<line x1="644.4" y1="394.6" x2="644.4" y2="322" stroke="#333"/>
<line x1="644.4" y1="394.6" x2="578" y2="355" stroke="#333"/>
<line x1="644.4" y1="394.6" x2="578" y2="432.5" stroke="#0c0c0d"/>
</g>
<path d="M644.4 314.5l1.8 8.5h-3.6z" fill="#1030e8"/>
<path d="M644.4 378l2 8v6h-4v-6z" fill="#1030e8"/>
<path d="M575.5 353.2l8.8 1.6-2 3.4z" fill="#f02020"/>
<path d="M630.5 386l8.5 2.6 3.6 4.4-5.4-0.6z" fill="#e81818"/>
<path d="M575.4 434l8.6-4.6 1.4 2.6z" fill="#18c060"/>
<path d="M630.6 401.6l8.4-5 2.6 0.4-2.4 3.4z" fill="#18c060"/>
<rect x="642.2" y="391.6" width="4.6" height="4.6" fill="#fff"/><rect x="642.2" y="391.6" width="2.3" height="2.3" fill="#111"/><rect x="644.5" y="393.9" width="2.3" height="2.3" fill="#111"/>
<text x="649.6" y="408.4" font-family="'Liberation Sans',sans-serif" font-size="7.5" fill="#d8d8d8">G54</text>
</svg>
<div id="titlebar" class="abs"></div>
<div class="abs" style="left:5.3px;top:41.2px;width:20px;font-size:11.6px;line-height:7.3px;letter-spacing:0.55px;color:#12c79a;font-weight:400;-webkit-text-stroke:0.35px #12c79a">en<br>cy</div>
<svg style="left:35.0px;top:44.0px" width="11" height="11" viewBox="0 0 11 11"><path d="M0.3 2h10.2M0.3 5.3h10.2M0.3 8.6h10.2" stroke="#e9e9e9" stroke-width="1.7"/></svg>
<svg style="left:64.0px;top:43.6px" width="10" height="12" viewBox="0 0 10 12"><path d="M0 0.3h5.4l4 4v7H0z" fill="#e9e9e9"/><path d="M5.4 0.3v4h4z" fill="#2e2e30"/><path d="M5.9 1.5v3h3z" fill="#c4c4c4"/></svg>
<svg style="left:90.0px;top:44.0px" width="14" height="11" viewBox="0 0 14 11"><path d="M0.3 1.2q0-0.9 0.9-0.9h3.3l1.3 1.4h4.9q0.8 0 0.8 0.8v1.1H3.2L0.3 9.2z" fill="#cfcfcf"/><path d="M3.4 4.4h10.2l-2.6 5.9H0.6z" fill="#e9e9e9"/></svg>
<svg style="left:119.4px;top:43.8px" width="11.6" height="11.4" viewBox="0 0 11.6 11.4"><path d="M0 0.6h9.2l2.2 2.2v8.4H0z" fill="#dcdcdc"/><rect x="2.4" y="0.6" width="5.6" height="3.4" fill="#5a5a5c"/><rect x="5.6" y="1" width="1.5" height="2.5" fill="#cfcfcf"/><rect x="2" y="5.8" width="7.4" height="5.4" fill="#77777a"/><path d="M3 7.4h5.4M3 9.3h5.4" stroke="#c8c8c8" stroke-width="0.9"/></svg>
<div class="sepv" style="left:139.8px;top:41px;height:16.5px"></div>
<div class="abs" style="left:146.2px;top:43.8px;width:11.6px;height:11px;border:1px solid #4a4a4c;border-top-width:2px;border-radius:1.5px"></div>
<div class="t b" style="left:164.2px;top:43.9px;font-size:10.2px;letter-spacing:-0.8px;word-spacing:0.6px">JIG Plate</div>
<div class="sepv" style="left:294.6px;top:41px;width:1.6px;height:16.5px;background:#3a3a3c"></div>
<div class="panel" style="left:3.4px;top:67.6px;width:259px;height:333.2px"></div>
<div class="inner" style="left:6px;top:98.2px;width:253.2px;height:299.2px"></div>
<div class="abs" style="left:92.4px;top:71px;width:80.4px;height:21.8px;background:#1c1c1d;border-radius:4px"></div>
<div class="t" style="left:8.2px;width:80px;text-align:center;top:76.8px;letter-spacing:-0.3px">Model</div>
<div class="t" style="left:92.6px;width:80px;text-align:center;top:76.8px;letter-spacing:-0.3px">Machining</div>
<div class="t" style="left:176.8px;width:80px;text-align:center;top:76.8px;letter-spacing:-0.3px">Simulation</div>
<svg style="left:17.0px;top:105.5px" width="16" height="14" viewBox="0 0 16 14"><circle cx="3.7" cy="4" r="2.5" fill="#f0f0f0"/><circle cx="3.7" cy="11" r="2.1" fill="none" stroke="#d8d8d8" stroke-width="0.9"/><path d="M7 3.7h6.1v7.2H9.4" fill="none" stroke="#19b58d" stroke-width="1"/><path d="M10.6 9l-2.6 1.9 2.6 1.9z" fill="#19d0a0"/></svg>
<div class="abs" style="left:39.1px;top:108.3px;width:13.4px;height:8.8px;border-radius:4.4px;background:#1b9f86"></div>
<div class="abs" style="left:44.5px;top:108.9px;width:7.6px;height:7.6px;border-radius:50%;background:#f4f4f4"></div>
<div class="t " style="left:55.0px;top:106.6px;letter-spacing:-0.25px;">Links</div>
<svg style="left:189.1px;top:107.2px" width="11.2" height="11.2" viewBox="0 0 11.2 11.2"><circle cx="5.60" cy="5.60" r="4.14" fill="#f0f0f0"/><rect x="3.86" y="0.10" width="3.47" height="3.36" rx="0.78" fill="#f0f0f0" transform="rotate(0.0 5.60 5.60)"/><rect x="3.86" y="0.10" width="3.47" height="3.36" rx="0.78" fill="#f0f0f0" transform="rotate(60.0 5.60 5.60)"/><rect x="3.86" y="0.10" width="3.47" height="3.36" rx="0.78" fill="#f0f0f0" transform="rotate(120.0 5.60 5.60)"/><rect x="3.86" y="0.10" width="3.47" height="3.36" rx="0.78" fill="#f0f0f0" transform="rotate(180.0 5.60 5.60)"/><rect x="3.86" y="0.10" width="3.47" height="3.36" rx="0.78" fill="#f0f0f0" transform="rotate(240.0 5.60 5.60)"/><rect x="3.86" y="0.10" width="3.47" height="3.36" rx="0.78" fill="#f0f0f0" transform="rotate(300.0 5.60 5.60)"/><circle cx="5.60" cy="5.60" r="2.02" fill="#262628"/></svg>
<svg style="left:212.7px;top:106.9px" width="12" height="12" viewBox="0 0 12 12"><path d="M2.2 3.2A4.8 4.8 0 0 1 10.6 4.6M9.8 8.8A4.8 4.8 0 0 1 1.4 7.4" fill="none" stroke="#cf8c22" stroke-width="1.1"/><path d="M1 1.6l2.8 0.4-1.9 2.3zM11 10.4l-2.8-0.4 1.9-2.3z" fill="#cf8c22"/><circle cx="6" cy="6" r="2.3" fill="#a86c14" stroke="#d4952c" stroke-width="0.9"/></svg>
<svg style="left:237.6px;top:107.3px" width="10" height="11" viewBox="0 0 10 11"><path d="M0.9 0.8l8.2 4.7-8.2 4.7z" fill="#14604f" stroke="#14a37c" stroke-width="1.1" stroke-linejoin="round"/></svg>
<svg style="left:20.4px;top:133.0px" width="9" height="5.6" viewBox="0 0 9 5.6"><path d="M0.4 0.5l4 4.3 4-4.3" fill="none" stroke="#d6d6d6" stroke-width="0.9"/></svg>
<div class="t b" style="left:35.8px;top:130.0px;font-size:10.5px;letter-spacing:-0.42px;">Operations</div>
<div class="t " style="left:184.9px;top:131.3px;letter-spacing:-0.32px;">Add operation</div>
<svg style="left:246.9px;top:135.9px" width="6" height="3.6" viewBox="0 0 6 3.6"><path d="M0 0h6l-3 3.4z" fill="#e6e6e6"/></svg>
<svg style="left:17.2px;top:151.6px" width="10" height="12.6" viewBox="0 0 10 12.6"><path d="M1.6 1.2l3.6-0.9 0.9 0.5v6.2h3.7v5H0.3V3z" fill="#68b040"/><path d="M1.6 1.2l3.6-0.9" stroke="#a4d67a" stroke-width="0.9"/><path d="M0.7 3.2v8.9h9" stroke="#477f28" stroke-width="0.9" fill="none"/><rect x="4.2" y="6.7" width="5.7" height="1.6" fill="#c8b4c4"/><rect x="6.9" y="1" width="1.3" height="5.2" fill="#ececec"/></svg>
<div class="t " style="left:29.6px;top:152.2px;letter-spacing:-0.25px;">Partner</div>
<div class="abs" style="left:15.8px;top:310.0px;width:235px;height:13.7px;background:#000"></div>
<div class="abs" style="left:230.1px;top:163px;width:1px;height:160.6px;background:#c4202c"></div>
<svg style="left:225.4px;top:152.8px" width="10.4" height="10.4" viewBox="0 0 10.4 10.4"><circle cx="5.2" cy="5.2" r="4.4" fill="#262628" stroke="#e8e8e8" stroke-width="1"/><rect x="3.4" y="3.4" width="3.6" height="3.6" rx="0.6" fill="#7c7c7e"/></svg>
<svg style="left:23.2px;top:166.3px" width="12.6" height="12.6" viewBox="0 0 12.6 12.6"><rect width="12.6" height="12.6" rx="1.2" fill="#1c1c1d"/><rect x="1" y="7" width="10.8" height="2.4" fill="#18c49a"/><rect x="1" y="10" width="10.8" height="1.6" fill="#e8e8e8"/><rect x="2.6" y="1.4" width="1.8" height="3.4" fill="#e8e8e8"/><rect x="1.6" y="5" width="3.8" height="1.8" fill="#e0a020"/><path d="M6.8 1.6v3.6h1.7V2.2h1.6v3.4" stroke="#e8e8e8" stroke-width="0.9" fill="none"/></svg>
<div class="t " style="left:37.0px;top:166.5px;letter-spacing:-0.24px;">Face Milling 1</div>
<div class="t tn" style="left:135.0px;top:166.5px;letter-spacing:-0.3px;-webkit-text-stroke:0.25px #1fa97c">T#1</div>
<div class="t tl" style="left:160.6px;top:166.5px;width:62.2px;overflow:hidden;letter-spacing:-0.22px">80mm Cylindrical</div>
<svg style="left:225.4px;top:167.5px" width="10.4" height="10.4" viewBox="0 0 10.4 10.4"><circle cx="5.2" cy="5.2" r="4.3" fill="#262628" stroke="#ececec" stroke-width="1.1"/><circle cx="5.2" cy="5.2" r="2.1" fill="#fff"/></svg>
<div class="abs" style="left:240.1px;top:169.3px;width:6.8px;height:6.8px;border-radius:50%;background:#d3a324"></div>
<svg style="left:23.2px;top:180.7px" width="12.6" height="12.6" viewBox="0 0 12.6 12.6"><rect width="12.6" height="12.6" rx="1.2" fill="#1c1c1d"/><path d="M6.6 1.6H2.4v2.2h4v2.2h-4v2.2h4v2.4H1.8" stroke="#e8e8e8" stroke-width="1.1" fill="none"/><path d="M9.6 1.4v10" stroke="#e8c020" stroke-width="1.9" stroke-dasharray="2.2 1.1"/></svg>
<div class="t " style="left:37.0px;top:180.9px;letter-spacing:-0.24px;">2D contouring 1</div>
<div class="t tn" style="left:135.0px;top:180.9px;letter-spacing:-0.3px;-webkit-text-stroke:0.25px #1fa97c">T#2</div>
<div class="t tl" style="left:160.6px;top:180.9px;width:62.2px;overflow:hidden;letter-spacing:-0.22px">10mm Cylindrical</div>
<svg style="left:225.4px;top:181.9px" width="10.4" height="10.4" viewBox="0 0 10.4 10.4"><circle cx="5.2" cy="5.2" r="4.3" fill="#262628" stroke="#ececec" stroke-width="1.1"/><circle cx="5.2" cy="5.2" r="2.1" fill="#fff"/></svg>
<div class="abs" style="left:240.1px;top:183.7px;width:6.8px;height:6.8px;border-radius:50%;background:#6c9a9c"></div>
<svg style="left:23.2px;top:195.1px" width="12.6" height="12.6" viewBox="0 0 12.6 12.6"><rect x="0.5" y="0.5" width="11.8" height="11.6" rx="1.4" fill="#e8f1fb" stroke="#5a9ff0" stroke-width="1"/><rect x="1.4" y="7.6" width="10" height="3.4" fill="#b9cfee"/><rect x="5" y="7.6" width="2.6" height="3.4" fill="#f6f9ff"/><rect x="4.6" y="1.4" width="2.2" height="4.6" fill="#e2b021"/><path d="M9 1.4v4.6M7.8 4.6L9 6.4l1.2-1.8" stroke="#2fa84a" stroke-width="0.9" fill="none"/></svg>
<div class="t " style="left:37.0px;top:195.3px;letter-spacing:-0.24px;">Hole machining 1</div>
<div class="t tn" style="left:135.0px;top:195.3px;letter-spacing:-0.3px;-webkit-text-stroke:0.25px #1fa97c">T#3</div>
<div class="t tl" style="left:160.6px;top:195.3px;width:62.2px;overflow:hidden;letter-spacing:-0.22px">10mm Countersink</div>
<svg style="left:225.4px;top:196.3px" width="10.4" height="10.4" viewBox="0 0 10.4 10.4"><circle cx="5.2" cy="5.2" r="4.3" fill="#262628" stroke="#ececec" stroke-width="1.1"/><circle cx="5.2" cy="5.2" r="2.1" fill="#fff"/></svg>
<div class="abs" style="left:240.1px;top:198.1px;width:6.8px;height:6.8px;border-radius:50%;background:#c78a3e"></div>
<svg style="left:23.2px;top:209.5px" width="12.6" height="12.6" viewBox="0 0 12.6 12.6"><rect x="0.5" y="0.5" width="11.8" height="11.6" rx="1.4" fill="#e8f1fb" stroke="#5a9ff0" stroke-width="1"/><rect x="1.4" y="7.6" width="10" height="3.4" fill="#b9cfee"/><rect x="5" y="7.6" width="2.6" height="3.4" fill="#f6f9ff"/><rect x="2" y="1.6" width="2.2" height="4.4" fill="#e2b021"/><rect x="5.2" y="1.6" width="1.4" height="3" fill="#4ab060"/><path d="M8.2 1.4v5" stroke="#2fa84a" stroke-width="1"/><path d="M10.2 1.4v5" stroke="#e04a4a" stroke-width="1"/></svg>
<div class="t " style="left:37.0px;top:209.7px;letter-spacing:-0.24px;">Hole machining 2</div>
<div class="t tn" style="left:135.0px;top:209.7px;letter-spacing:-0.3px;-webkit-text-stroke:0.25px #1fa97c">T#4</div>
<div class="t tl" style="left:160.6px;top:209.7px;width:62.2px;overflow:hidden;letter-spacing:-0.22px">3.4mm Drill</div>
<svg style="left:225.4px;top:210.7px" width="10.4" height="10.4" viewBox="0 0 10.4 10.4"><circle cx="5.2" cy="5.2" r="4.3" fill="#262628" stroke="#ececec" stroke-width="1.1"/><circle cx="5.2" cy="5.2" r="2.1" fill="#fff"/></svg>
<div class="abs" style="left:240.1px;top:212.5px;width:6.8px;height:6.8px;border-radius:50%;background:#c78a3e"></div>
<svg style="left:23.2px;top:223.9px" width="12.6" height="12.6" viewBox="0 0 12.6 12.6"><rect x="0.5" y="0.5" width="11.8" height="11.6" rx="1.4" fill="#e8f1fb" stroke="#5a9ff0" stroke-width="1"/><rect x="1.4" y="7.6" width="10" height="3.4" fill="#b9cfee"/><rect x="5" y="7.6" width="2.6" height="3.4" fill="#f6f9ff"/><rect x="2" y="1.6" width="2.2" height="4.4" fill="#e2b021"/><rect x="5.2" y="1.6" width="1.4" height="3" fill="#4ab060"/><path d="M8.2 1.4v5" stroke="#2fa84a" stroke-width="1"/><path d="M10.2 1.4v5" stroke="#e04a4a" stroke-width="1"/></svg>
<div class="t " style="left:37.0px;top:224.1px;letter-spacing:-0.24px;">Hole machining 3</div>
<div class="t tn" style="left:135.0px;top:224.1px;letter-spacing:-0.3px;-webkit-text-stroke:0.25px #1fa97c">T#5</div>
<div class="t tl" style="left:160.6px;top:224.1px;width:62.2px;overflow:hidden;letter-spacing:-0.22px">10mm Drill</div>
<svg style="left:225.4px;top:225.1px" width="10.4" height="10.4" viewBox="0 0 10.4 10.4"><circle cx="5.2" cy="5.2" r="4.3" fill="#262628" stroke="#ececec" stroke-width="1.1"/><circle cx="5.2" cy="5.2" r="2.1" fill="#fff"/></svg>
<div class="abs" style="left:240.1px;top:226.9px;width:6.8px;height:6.8px;border-radius:50%;background:#c78a3e"></div>
<svg style="left:23.2px;top:238.3px" width="12.6" height="12.6" viewBox="0 0 12.6 12.6"><rect width="12.6" height="12.6" rx="1.2" fill="#1c1c1d"/><path d="M1.4 4.6v6.6h9.8V4.6" stroke="#e8e8e8" stroke-width="1.1" fill="none"/><rect x="3.4" y="5.6" width="5.8" height="4.2" fill="#18b08a"/><rect x="5.2" y="1.2" width="2.2" height="5" fill="#e8c020"/><path d="M3.6 7.6h5.4" stroke="#e8c020" stroke-width="0.8" stroke-dasharray="1 1"/></svg>
<div class="t " style="left:37.0px;top:238.5px;letter-spacing:-0.24px;">Pocketing 1</div>
<div class="t tn" style="left:135.0px;top:238.5px;letter-spacing:-0.3px;-webkit-text-stroke:0.25px #1fa97c">T#2</div>
<div class="t tl" style="left:160.6px;top:238.5px;width:62.2px;overflow:hidden;letter-spacing:-0.22px">10mm Cylindrical</div>
<svg style="left:225.4px;top:239.6px" width="10.4" height="10.4" viewBox="0 0 10.4 10.4"><circle cx="5.2" cy="5.2" r="4.3" fill="#262628" stroke="#ececec" stroke-width="1.1"/><circle cx="5.2" cy="5.2" r="2.1" fill="#fff"/></svg>
<div class="abs" style="left:240.1px;top:241.3px;width:6.8px;height:6.8px;border-radius:50%;background:#6d9c3e"></div>
<svg style="left:23.2px;top:252.8px" width="12.6" height="12.6" viewBox="0 0 12.6 12.6"><rect x="0.5" y="0.5" width="11.8" height="11.6" rx="1.4" fill="#e8f1fb" stroke="#5a9ff0" stroke-width="1"/><rect x="1.4" y="7.6" width="10" height="3.4" fill="#b9cfee"/><rect x="5" y="7.6" width="2.6" height="3.4" fill="#f6f9ff"/><rect x="4" y="1.6" width="1.6" height="4.6" fill="#8a6a20"/><rect x="6.8" y="1.6" width="1.6" height="4.6" fill="#8a6a20"/><rect x="3.2" y="5.2" width="6" height="1.6" fill="#c9a030"/></svg>
<div class="t " style="left:37.0px;top:253.0px;letter-spacing:-0.24px;">Hole machining 4</div>
<div class="t tn" style="left:135.0px;top:253.0px;letter-spacing:-0.3px;-webkit-text-stroke:0.25px #1fa97c">T#6</div>
<div class="t tl" style="left:160.6px;top:253.0px;width:62.2px;overflow:hidden;letter-spacing:-0.22px">8mm Cylindrical</div>
<svg style="left:225.4px;top:254.0px" width="10.4" height="10.4" viewBox="0 0 10.4 10.4"><circle cx="5.2" cy="5.2" r="4.3" fill="#262628" stroke="#ececec" stroke-width="1.1"/><circle cx="5.2" cy="5.2" r="2.1" fill="#fff"/></svg>
<div class="abs" style="left:240.1px;top:255.8px;width:6.8px;height:6.8px;border-radius:50%;background:#f2e61e"></div>
<svg style="left:23.2px;top:267.2px" width="12.6" height="12.6" viewBox="0 0 12.6 12.6"><rect width="12.6" height="12.6" rx="1.2" fill="#1c1c1d"/><path d="M6.6 1.6H2.4v2.2h4v2.2h-4v2.2h4v2.4H1.8" stroke="#e8e8e8" stroke-width="1.1" fill="none"/><path d="M9.6 1.4v10" stroke="#e8c020" stroke-width="1.9" stroke-dasharray="2.2 1.1"/></svg>
<div class="t " style="left:37.0px;top:267.4px;letter-spacing:-0.24px;">2D contouring 2</div>
<div class="t tn" style="left:135.0px;top:267.4px;letter-spacing:-0.3px;-webkit-text-stroke:0.25px #1fa97c">T#6</div>
<div class="t tl" style="left:160.6px;top:267.4px;width:62.2px;overflow:hidden;letter-spacing:-0.22px">8mm Cylindrical</div>
<svg style="left:225.4px;top:268.4px" width="10.4" height="10.4" viewBox="0 0 10.4 10.4"><circle cx="5.2" cy="5.2" r="4.3" fill="#262628" stroke="#ececec" stroke-width="1.1"/><circle cx="5.2" cy="5.2" r="2.1" fill="#fff"/></svg>
<div class="abs" style="left:240.1px;top:270.2px;width:6.8px;height:6.8px;border-radius:50%;background:#f2e61e"></div>
<svg style="left:23.2px;top:281.6px" width="12.6" height="12.6" viewBox="0 0 12.6 12.6"><rect width="12.6" height="12.6" rx="1.2" fill="#1c1c1d"/><path d="M6.6 1.6H2.4v2.2h4v2.2h-4v2.2h4v2.4H1.8" stroke="#e8e8e8" stroke-width="1.1" fill="none"/><path d="M9.6 1.4v10" stroke="#e8c020" stroke-width="1.9" stroke-dasharray="2.2 1.1"/></svg>
<div class="t " style="left:37.0px;top:281.8px;letter-spacing:-0.24px;">2D contouring 3</div>
<div class="t tn" style="left:135.0px;top:281.8px;letter-spacing:-0.3px;-webkit-text-stroke:0.25px #1fa97c">T#3</div>
<div class="t tl" style="left:160.6px;top:281.8px;width:62.2px;overflow:hidden;letter-spacing:-0.22px">10mm Countersink</div>
<svg style="left:225.4px;top:282.8px" width="10.4" height="10.4" viewBox="0 0 10.4 10.4"><circle cx="5.2" cy="5.2" r="4.3" fill="#262628" stroke="#ececec" stroke-width="1.1"/><circle cx="5.2" cy="5.2" r="2.1" fill="#fff"/></svg>
<div class="abs" style="left:240.1px;top:284.6px;width:6.8px;height:6.8px;border-radius:50%;background:#f2851e"></div>
<svg style="left:23.2px;top:296.0px" width="12.6" height="12.6" viewBox="0 0 12.6 12.6"><rect width="12.6" height="12.6" rx="1.2" fill="#1c1c1d"/><path d="M6.6 1.6H2.4v2.2h4v2.2h-4v2.2h4v2.4H1.8" stroke="#e8e8e8" stroke-width="1.1" fill="none"/><path d="M9.6 1.4v10" stroke="#e8c020" stroke-width="1.9" stroke-dasharray="2.2 1.1"/></svg>
<div class="t " style="left:37.0px;top:296.2px;letter-spacing:-0.24px;">2.5D contouring 1</div>
<div class="t tn" style="left:135.0px;top:296.2px;letter-spacing:-0.3px;-webkit-text-stroke:0.25px #1fa97c">T#3</div>
<div class="t tl" style="left:160.6px;top:296.2px;width:62.2px;overflow:hidden;letter-spacing:-0.22px">10mm Countersink</div>
<svg style="left:225.4px;top:297.2px" width="10.4" height="10.4" viewBox="0 0 10.4 10.4"><circle cx="5.2" cy="5.2" r="4.3" fill="#262628" stroke="#ececec" stroke-width="1.1"/><circle cx="5.2" cy="5.2" r="2.1" fill="#fff"/></svg>
<div class="abs" style="left:240.1px;top:299.0px;width:6.8px;height:6.8px;border-radius:50%;background:#d0676f"></div>
<svg style="left:23.2px;top:310.4px" width="12.6" height="12.6" viewBox="0 0 12.6 12.6"><rect x="0.5" y="0.5" width="11.8" height="11.6" rx="1.4" fill="#e8f1fb" stroke="#5a9ff0" stroke-width="1"/><rect x="1.4" y="7.6" width="10" height="3.4" fill="#b9cfee"/><rect x="5" y="7.6" width="2.6" height="3.4" fill="#f6f9ff"/><rect x="3.6" y="1.8" width="5.4" height="3.2" fill="#c9a030"/><rect x="5.4" y="4.6" width="1.8" height="2.6" fill="#8a6a20"/></svg>
<div class="t " style="left:37.0px;top:310.6px;letter-spacing:-0.24px;">Hole machining 5</div>
<div class="t tn" style="left:135.0px;top:310.6px;letter-spacing:-0.3px;-webkit-text-stroke:0.25px #1fa97c">T#7</div>
<div class="t tl" style="left:160.6px;top:310.6px;width:62.2px;overflow:hidden;letter-spacing:-0.22px">4mm Tap</div>
<svg style="left:225.4px;top:311.6px" width="10.4" height="10.4" viewBox="0 0 10.4 10.4"><circle cx="5.2" cy="5.2" r="4.3" fill="#000" stroke="#ececec" stroke-width="1.1"/><circle cx="5.2" cy="5.2" r="2.1" fill="#fff"/></svg>
<div class="abs" style="left:240.1px;top:313.4px;width:6.8px;height:6.8px;border-radius:50%;background:#c78a3e"></div>
<div class="panel" style="left:3.2px;top:404.9px;width:258.6px;height:331.1px;background:#2f2f31"></div>
<div class="abs" style="left:36.8px;top:407.9px;width:222.1px;height:325.6px;background:#29292b;border-radius:0 6px 6px 0"></div>
<div class="abs" style="left:7.4px;top:409.8px;width:25.6px;height:6.2px;background:#25261d;border-radius:2px"></div>
<div class="abs" style="left:6.6px;top:418.9px;width:27.2px;height:27.2px;background:#1c1c1d;border-radius:4px"></div>
<svg style="left:13.7px;top:426.4px" width="13.2" height="13.2" viewBox="0 0 13.2 13.2"><circle cx="6.6" cy="6.6" r="5.7" fill="#fff"/><path d="M6.6 6.6V0.9A5.7 5.7 0 0 0 0.9 6.6zM6.6 6.6v5.7A5.7 5.7 0 0 0 12.3 6.6z" fill="#1c1c1d"/><circle cx="6.6" cy="6.6" r="5.7" fill="none" stroke="#fff" stroke-width="1"/></svg>
<svg style="left:13.8px;top:454.2px" width="13" height="14" viewBox="0 0 13 14"><rect x="0.5" y="6.5" width="12" height="7" fill="none" stroke="#cfcfcf" stroke-width="0.9" stroke-dasharray="1.6 1.2"/><path d="M2.6 6.4l1.6-4.6q0.3-0.9 1.2-0.9h2.2q0.9 0 1.2 0.9l1.6 4.6" fill="none" stroke="#9a9a9a" stroke-width="0.9" stroke-dasharray="1.6 1.2"/></svg>
<svg style="left:14.7px;top:484.1px" width="11.2" height="11.2" viewBox="0 0 11.2 11.2"><circle cx="5.6" cy="5.6" r="5.2" fill="#f0f0f0"/><path d="M2.6 8.8l5.6-6 1 1-5.4 6.2zM4 6.2a2.2 2.2 0 1 0 3.4 2.6" fill="#2f2f31" stroke="#2f2f31" stroke-width="0.5"/></svg>
<svg style="left:14.5px;top:512.4px" width="11.6" height="11.6" viewBox="0 0 11.6 11.6"><circle cx="5.80" cy="5.80" r="4.29" fill="#f0f0f0"/><rect x="4.00" y="0.10" width="3.60" height="3.48" rx="0.81" fill="#f0f0f0" transform="rotate(0.0 5.80 5.80)"/><rect x="4.00" y="0.10" width="3.60" height="3.48" rx="0.81" fill="#f0f0f0" transform="rotate(60.0 5.80 5.80)"/><rect x="4.00" y="0.10" width="3.60" height="3.48" rx="0.81" fill="#f0f0f0" transform="rotate(120.0 5.80 5.80)"/><rect x="4.00" y="0.10" width="3.60" height="3.48" rx="0.81" fill="#f0f0f0" transform="rotate(180.0 5.80 5.80)"/><rect x="4.00" y="0.10" width="3.60" height="3.48" rx="0.81" fill="#f0f0f0" transform="rotate(240.0 5.80 5.80)"/><rect x="4.00" y="0.10" width="3.60" height="3.48" rx="0.81" fill="#f0f0f0" transform="rotate(300.0 5.80 5.80)"/><circle cx="5.80" cy="5.80" r="2.09" fill="#2f2f31"/></svg>
<svg style="left:14.3px;top:538.7px" width="12" height="14" viewBox="0 0 12 14"><path d="M2.6 13V2.4M0.4 4.8L2.6 1.4l2.2 3.4zM9.4 1v10.6M7.2 9.2l2.2 3.4 2.2-3.4z" fill="#f0f0f0" stroke="#f0f0f0" stroke-width="0.9"/><path d="M4.4 1.4h3.4M5.2 12.6h2.6" stroke="#bdbdbd" stroke-width="0.9" stroke-dasharray="1.2 1"/></svg>
<svg style="left:16.7px;top:566.8px" width="7.2" height="13" viewBox="0 0 7.2 13"><path d="M0.2 0.4h6.8v1.4H0.2zM1 2.4h5.2L5.4 5.4H1.8z" fill="#f0f0f0"/><path d="M3.6 5.6v6.2" stroke="#e6e6e6" stroke-width="1.6" stroke-dasharray="1.3 0.8"/><path d="M2.6 11.6h2l-1 1.4z" fill="#e6e6e6"/></svg>
<svg style="left:14.7px;top:596.4px" width="11.2" height="11.2" viewBox="0 0 11.2 11.2"><circle cx="5.6" cy="5.6" r="5.2" fill="#f0f0f0"/><circle cx="5.6" cy="5" r="2.2" fill="none" stroke="#2f2f31" stroke-width="1.1"/><path d="M5.6 0.6v3" stroke="#2f2f31" stroke-width="1.4"/></svg>
<svg style="left:13.5px;top:628.5px" width="13.6" height="3" viewBox="0 0 13.6 3"><rect x="0" y="0.2" width="2.7" height="2.6" fill="#f0f0f0"/><rect x="5.4" y="0.2" width="2.7" height="2.6" fill="#f0f0f0"/><rect x="10.8" y="0.2" width="2.7" height="2.6" fill="#f0f0f0"/></svg>
<div class="t b" style="left:46.7px;top:415.5px;font-size:10.5px;letter-spacing:-0.5px;">Setup</div>
<div class="abs" style="left:46.7px;top:438px;width:204px;height:12.2px;background:#3a3a41;border-radius:2px"></div>
<div class="abs" style="left:190.3px;top:438px;width:1px;height:12.2px;background:#5a5a60"></div>
<svg style="left:50.2px;top:442.4px" width="6.4" height="4" viewBox="0 0 6.4 4"><path d="M0.4 0.5l2.8 3 2.8-3" fill="none" stroke="#b4b4b4" stroke-width="1.1"/></svg>
<svg style="left:59.8px;top:439.4px" width="9" height="9" viewBox="0 0 9 9"><path d="M0.8 8.2L4.6 4.4" stroke="#f0f0f0" stroke-width="1.7" stroke-linecap="round"/><path d="M8.4 1.6L6.8 3.2 5.8 2.2 7.4 0.6A2.6 2.6 0 0 0 4.2 3.6 2.6 2.6 0 0 0 8.4 1.6z" fill="#f0f0f0" stroke="#f0f0f0" stroke-width="0.6"/></svg>
<div class="t b" style="left:71.8px;top:437.9px;letter-spacing:-0.2px;">Setup and tooling</div>
<svg style="left:70.6px;top:453.8px" width="8.4" height="8.4" viewBox="0 0 8.4 8.4"><circle cx="4.2" cy="4.2" r="3.8" fill="#f4f4f4"/><path d="M4.2 4.2V0.4A3.8 3.8 0 0 1 8 4.2zM4.2 4.2v3.8A3.8 3.8 0 0 1 0.4 4.2z" fill="#3a3a3c"/><circle cx="4.2" cy="4.2" r="3.8" fill="none" stroke="#f4f4f4" stroke-width="0.7"/></svg>
<div class="t " style="left:81.8px;top:451.8px;letter-spacing:-0.3px;">WCS</div>
<div class="t " style="left:194.4px;top:451.8px;letter-spacing:-0.34px;">From Previous</div>
<svg style="left:50.2px;top:475.2px" width="6.4" height="4" viewBox="0 0 6.4 4"><path d="M0.4 0.5l2.8 3 2.8-3" fill="none" stroke="#b4b4b4" stroke-width="1.1"/></svg>
<svg style="left:59.6px;top:472.4px" width="9.4" height="9.4" viewBox="0 0 9.4 9.4"><path d="M0.8 8.6L8.6 0.8" stroke="#1a9f88" stroke-width="0.9"/><circle cx="0.9" cy="8.5" r="0.9" fill="#19c9a0"/><circle cx="8.5" cy="0.9" r="0.7" fill="#19c9a0"/></svg>
<div class="t b" style="left:70.8px;top:470.8px;letter-spacing:-0.13px;">Tool coordinates in WCS</div>
<svg style="left:70.2px;top:486.0px" width="9.4" height="9.4" viewBox="0 0 9.4 9.4"><path d="M0.8 8.6L8.6 0.8" stroke="#1a9f88" stroke-width="0.9"/><circle cx="0.9" cy="8.5" r="0.9" fill="#19c9a0"/><circle cx="8.5" cy="0.9" r="0.7" fill="#19c9a0"/></svg>
<div class="t " style="left:81.0px;top:484.8px;letter-spacing:-0.24px;">X (Axis X Position)</div>
<div class="t " style="left:194.4px;top:484.8px;letter-spacing:-0.2px;color:#d8d8d8;">0</div>
<svg style="left:70.2px;top:499.8px" width="9.4" height="9.4" viewBox="0 0 9.4 9.4"><path d="M0.8 8.6L8.6 0.8" stroke="#1a9f88" stroke-width="0.9"/><circle cx="0.9" cy="8.5" r="0.9" fill="#19c9a0"/><circle cx="8.5" cy="0.9" r="0.7" fill="#19c9a0"/></svg>
<div class="t " style="left:81.0px;top:498.6px;letter-spacing:-0.24px;">Y (Axis Y Position)</div>
<div class="t " style="left:194.4px;top:498.6px;letter-spacing:-0.2px;color:#d8d8d8;">0</div>
<svg style="left:70.2px;top:513.5px" width="9.4" height="9.4" viewBox="0 0 9.4 9.4"><path d="M0.8 8.6L8.6 0.8" stroke="#1a9f88" stroke-width="0.9"/><circle cx="0.9" cy="8.5" r="0.9" fill="#19c9a0"/><circle cx="8.5" cy="0.9" r="0.7" fill="#19c9a0"/></svg>
<div class="t " style="left:81.0px;top:512.3px;letter-spacing:-0.24px;">Z (Axis Z Position)</div>
<div class="t " style="left:194.4px;top:512.3px;letter-spacing:-0.2px;color:#d8d8d8;">610</div>
<div class="abs" style="left:266.2px;top:67.8px;width:25.4px;height:385px;background:#2d2d2f;border-radius:12.7px"></div>
<div class="abs" style="left:266.4px;top:575.6px;width:25.2px;height:75.2px;background:#2d2d2f;border-radius:12.6px"></div>
<svg style="left:276.0px;top:78.3px" width="6" height="3.6" viewBox="0 0 6 3.6"><path d="M0 3.4h6l-3-3.4z" fill="#e6e6e6"/></svg>
<svg style="left:268.5px;top:92.3px" width="21" height="21" viewBox="0 0 21 21"><circle cx="10.5" cy="10.5" r="9.6" fill="none" stroke="#167e69" stroke-width="1"/></svg>
<svg style="left:273.5px;top:97.3px" width="11" height="11" viewBox="0 0 11 11"><path d="M2.6 1h5.8l1 4.4H1.6z" fill="none" stroke="#e0e0e0" stroke-width="1"/><rect x="1" y="5.6" width="9" height="3.8" rx="0.8" fill="none" stroke="#e0e0e0" stroke-width="1"/><path d="M3 7.5h5" stroke="#e0e0e0" stroke-width="0.9"/></svg>
<svg style="left:268.5px;top:114.5px" width="21" height="21" viewBox="0 0 21 21"><circle cx="10.5" cy="10.5" r="9.6" fill="none" stroke="#167e69" stroke-width="1"/></svg>
<svg style="left:274.0px;top:120.0px" width="10" height="10" viewBox="0 0 10 10"><path d="M2.6 0.6h4.8q0.8 0 0.8 0.8v3.4H1.8V1.4q0-0.8 0.8-0.8z" fill="#ececec"/><rect x="0.6" y="5.6" width="8.8" height="1.9" fill="#ececec"/><rect x="2" y="8.2" width="6" height="1.3" fill="#bdbdbd"/></svg>
<svg style="left:268.5px;top:137.0px" width="21" height="21" viewBox="0 0 21 21"><circle cx="10.5" cy="10.5" r="9.6" fill="none" stroke="#167e69" stroke-width="1"/></svg>
<svg style="left:274.0px;top:142.5px" width="10" height="10" viewBox="0 0 10 10"><path d="M2.6 0.6h4.8q0.8 0 0.8 0.8v3.4H1.8V1.4q0-0.8 0.8-0.8z" fill="#12d6a2"/><rect x="0.6" y="5.6" width="8.8" height="1.9" fill="#ececec"/><rect x="2" y="8.2" width="6" height="1.3" fill="#bdbdbd"/></svg>
<div class="abs" style="left:274.7px;top:164.9px;width:8.6px;height:10px;background:#ececec"></div>
<svg style="left:274.5px;top:187.8px" width="9" height="9" viewBox="0 0 9 9"><path d="M2.4 0.4h4.2q0.8 0 0.8 0.8v3H1.6v-3q0-0.8 0.8-0.8z" fill="#12d6a2"/><rect x="0.4" y="4.8" width="8.2" height="1.9" fill="#12d6a2"/><rect x="1.8" y="7.3" width="5.4" height="1.3" fill="#0fa07c"/></svg>
<svg style="left:268.5px;top:203.9px" width="21" height="21" viewBox="0 0 21 21"><circle cx="10.5" cy="10.5" r="9.6" fill="none" stroke="#167e69" stroke-width="1"/></svg>
<svg style="left:275.0px;top:209.0px" width="8" height="11" viewBox="0 0 8 11"><rect x="1" y="0.2" width="6" height="1.5" fill="#ececec"/><rect x="0.4" y="2.3" width="7.2" height="2.2" fill="#ececec"/><path d="M1.4 5.1h5.2L4 10.6z" fill="#f2c21a"/></svg>
<svg style="left:276.6px;top:231.1px" width="4.8" height="11.4" viewBox="0 0 4.8 11.4"><rect x="0.2" y="0" width="4.4" height="1.1" fill="#e6e6e6"/><rect x="0.6" y="1.8" width="3.6" height="1.1" fill="#e6e6e6"/><path d="M2.4 3.6v6.6" stroke="#e8c020" stroke-width="2" stroke-dasharray="1.5 0.8"/><path d="M1.2 10h2.4l-1.2 1.4z" fill="#e8c020"/></svg>
<svg style="left:268.5px;top:248.7px" width="21" height="21" viewBox="0 0 21 21"><circle cx="10.5" cy="10.5" r="9.6" fill="none" stroke="#167e69" stroke-width="1"/></svg>
<svg style="left:274.0px;top:254.2px" width="10" height="10" viewBox="0 0 10 10"><path d="M0.6 9.4V4.6Q0.6 0.8 5 0.8T9.4 4.6v4.8H6.8V6H3.2v3.4z" fill="#ececec"/><path d="M0.6 9.4V4.6Q0.6 1.4 3.4 0.9v3.2l-0.2 5.3z" fill="#f0bc1a"/><rect x="4" y="2.6" width="2" height="1.8" fill="#2d2d2f"/></svg>
<svg style="left:275.4px;top:276.8px" width="7.2" height="9.2" viewBox="0 0 7.2 9.2"><path d="M0.6 1.2h5.6v6.8H0.6" fill="none" stroke="#ececec" stroke-width="1.9"/><rect x="0" y="3.2" width="2.4" height="2.8" fill="#2d2d2f"/><rect x="0.4" y="3.8" width="2" height="1.6" fill="#8a8a8a"/></svg>
<svg style="left:268.5px;top:293.1px" width="21" height="21" viewBox="0 0 21 21"><circle cx="10.5" cy="10.5" r="9.6" fill="none" stroke="#167e69" stroke-width="1"/></svg>
<svg style="left:274.0px;top:298.6px" width="10" height="10" viewBox="0 0 10 10"><circle cx="5" cy="5" r="3.3" fill="#9a9a9a"/><path d="M5 0.4v9.2M0.4 5h9.2M1.8 1.8l6.4 6.4M8.2 1.8L1.8 8.2" stroke="#9a9a9a" stroke-width="1.5" stroke-dasharray="1.6 6 1.6 0"/><path d="M3.2 3.2l3.6 3.6M6.8 3.2L3.2 6.8" stroke="#5a5a5a" stroke-width="0.7"/></svg>
<div class="abs" style="left:269.5px;top:316.4px;width:19px;height:1px;background:linear-gradient(90deg,#2d2d2f,#6a6a6c,#2d2d2f)"></div>
<div class="abs" style="left:276.3px;top:326.5px;width:5.4px;height:5.4px;border-radius:50%;background:#12d6a2"></div>
<svg style="left:273.5px;top:347.0px" width="11" height="9" viewBox="0 0 11 9"><path d="M0.6 6.6V4.2Q0.6 0.8 3 0.8T5.5 4.4 8 8.2t2.4-3.6V2.4" fill="none" stroke="#dcdcdc" stroke-width="1"/></svg>
<svg style="left:274.0px;top:369.6px" width="10" height="8.4" viewBox="0 0 10 8.4"><path d="M0.6 1.6Q5 -0.4 9.4 1.6V7.6Q5 5.8 0.6 7.6z" fill="#12d6a2"/></svg>
<svg style="left:273.8px;top:391.0px" width="10.4" height="10" viewBox="0 0 10.4 10"><defs><linearGradient id="sf2" x1="0" x2="1"><stop offset="0" stop-color="#8a8a8a"/><stop offset="0.5" stop-color="#e6e6e6"/><stop offset="1" stop-color="#8a8a8a"/></linearGradient></defs><path d="M0.8 1.6Q5.2 -0.2 9.6 1.6V8.6Q5.2 6.8 0.8 8.6z" fill="url(#sf2)" stroke="#12c79a" stroke-width="1"/></svg>
<svg style="left:273.8px;top:413.8px" width="10.4" height="9.2" viewBox="0 0 10.4 9.2"><path d="M0.8 1.8Q5.2 0 9.6 1.8V8.4Q5.2 6.8 0.8 8.4zM0.8 5Q5.2 3.4 9.6 5M5.2 0.8V7.4" fill="none" stroke="#12c79a" stroke-width="1"/></svg>
<svg style="left:274.0px;top:436.3px" width="11" height="9.4" viewBox="0 0 11 9.4"><defs><linearGradient id="sf3" x1="0" x2="0" y1="0" y2="1"><stop offset="0" stop-color="#f0f0f0"/><stop offset="1" stop-color="#8a8a8a"/></linearGradient></defs><path d="M0.8 1.4Q4.6 -0.2 8.4 1.4V7.6Q4.6 6 0.8 7.6z" fill="url(#sf3)"/><circle cx="9.4" cy="8.2" r="1" fill="#12d6a2"/></svg>
<svg style="left:273.2px;top:583.3px" width="11.6" height="11.6" viewBox="0 0 11.6 11.6"><path d="M0.8 3.6V0.8h2.8M8 0.8h2.8v2.8M10.8 8v2.8H8M3.6 10.8H0.8V8" fill="none" stroke="#14e4b0" stroke-width="1.6"/><rect x="3.2" y="3.2" width="5.2" height="5.2" fill="#f8f8f8"/></svg>
<svg style="left:274.0px;top:608.6px" width="10" height="10" viewBox="0 0 10 10"><defs><radialGradient id="sph" cx="0.35" cy="0.3" r="0.85"><stop offset="0" stop-color="#fff"/><stop offset="0.6" stop-color="#e0e0e0"/><stop offset="1" stop-color="#8a8a8a"/></radialGradient></defs><circle cx="5" cy="5" r="4.8" fill="url(#sph)"/><path d="M5.6 0.3v9.4M0.3 5.6h9.4" stroke="#5a5a5a" stroke-width="0.7"/><path d="M5.6 5.6h4.1a4.8 4.8 0 0 1-4.1 4.1z" fill="#8a8a8a"/></svg>
<svg style="left:274.6px;top:632.6px" width="8.8" height="11.6" viewBox="0 0 8.8 11.6"><path d="M0.6 0.4h4.6v2.6h3v5.6h-3v2.6H0.6z" fill="#14e4b0"/></svg>
<div class="abs" style="left:612.4px;top:67.8px;width:292.4px;height:32.4px;background:#2d2d2f;border-radius:7px"></div>
<div class="sepv" style="left:700.6px;top:76.5px;height:15.5px;background:#454547"></div>
<div class="sepv" style="left:787.2px;top:76.5px;height:15.5px;background:#454547"></div>
<svg style="left:622.7px;top:78.5px" width="14" height="11" viewBox="0 0 14 11"><path d="M8 1.6H5.6a3.9 3.9 0 0 0 0 7.8H8" fill="none" stroke="#ececec" stroke-width="2.4"/><path d="M6.3 0v3M6.3 8v3" stroke="#2d2d2f" stroke-width="0.7"/><path d="M11.4 0v11" stroke="#8a8a8a" stroke-width="0.8" stroke-dasharray="2 1.4"/><circle cx="11.4" cy="5.5" r="1.5" fill="#12d6a2"/></svg>
<svg style="left:650.2px;top:78.0px" width="15" height="12" viewBox="0 0 15 12"><circle cx="6" cy="5.6" r="5" fill="#e2e2e2"/><circle cx="6" cy="5.6" r="2.6" fill="#12c79a" stroke="#8a8a8a" stroke-width="0.9"/><path d="M1 10.8h8.8v-2" stroke="#e2e2e2" stroke-width="1.4" fill="none"/><path d="M10 10.8h4.6" stroke="#bdbdbd" stroke-width="1"/><circle cx="10.6" cy="10.6" r="1" fill="#12d6a2"/></svg>
<svg style="left:679.6px;top:77.4px" width="13" height="14" viewBox="0 0 13 14"><path d="M0.6 1.6h9.2" stroke="#cfcfcf" stroke-width="1.5"/><path d="M4.7 0.4v12.2" stroke="#dcdcdc" stroke-width="2"/><path d="M2.3 2v5.2" stroke="#a8a8a8" stroke-width="1.1"/><path d="M5 5.6h4.4" stroke="#dcdcdc" stroke-width="1.6"/><path d="M7.4 6v4.2" stroke="#a8a8a8" stroke-width="1.1"/><path d="M3.6 12.6h2.4l-1.2 1.2z" fill="#cfcfcf"/><circle cx="10.6" cy="3.2" r="1.8" fill="#12d6a2"/></svg>
<div class="t b" style="left:704.5px;top:78.0px;width:24px;text-align:center;font-size:12.4px;letter-spacing:-0.2px;color:#12c79a;transform:scaleX(0.8);-webkit-text-stroke:0.35px #12c79a">N1</div>
<svg style="left:738.6px;top:78.4px" width="10.8" height="11.2" viewBox="0 0 10.8 11.2"><rect x="0.4" y="0.4" width="10" height="10.4" rx="0.8" fill="#e8e8e8"/><path d="M1.2 9.2h8.4" stroke="#9a9a9a" stroke-width="1" stroke-dasharray="1.2 0.8"/></svg>
<svg style="left:766.4px;top:78.6px" width="12.8" height="11" viewBox="0 0 12.8 11"><path d="M0.4 3a2.6 2.6 0 0 1 5.2 0v1.6H0.4z" fill="#12c79a"/><path d="M7 3a2.6 2.6 0 0 1 5.2 0v1.6H7z" fill="#12c79a"/><path d="M0.8 5h4.4l-0.6 3.2v2.4H1.6V8.2zM7.4 5h4.4l-0.6 3.2v2.4H8.2V8.2z" fill="#ececec"/><path d="M1 2.4l1.4 1M3 0.8v1.6M10 0.8v1.6M11.6 2.4l-1.4 1" stroke="#e8fff8" stroke-width="0.6"/></svg>
<svg style="left:796.1px;top:78.0px" width="12.8" height="12" viewBox="0 0 12.8 12"><rect x="0.5" y="0.5" width="11.8" height="11" rx="1" fill="#8a8a8c" stroke="#e2e2e2" stroke-width="1"/><rect x="2" y="2" width="8.8" height="2.4" fill="#d8d8d8"/><rect x="2" y="5.6" width="1.5" height="4.6" fill="#ececec"/><rect x="4.6" y="5.6" width="1.5" height="4.6" fill="#ececec"/><circle cx="9.6" cy="8.6" r="2" fill="#12c79a" stroke="#2d2d2f" stroke-width="0.6"/></svg>
<svg style="left:822.6px;top:78.4px" width="16" height="11.4" viewBox="0 0 16 11.4"><path d="M1.4 0.4l3.2 10 3.4-8.6 3.4 8.6 3.2-10" fill="none" stroke="#9a9a9a" stroke-width="0.9"/><path d="M0.4 8.8Q4 9.6 6 6T10 3.6t5.6 4.6" fill="none" stroke="#1688c8" stroke-width="1.1"/><path d="M1 2.6Q4 1.2 6.6 4.8T11.4 8t4-4.6" fill="none" stroke="#12c79a" stroke-width="0.9"/></svg>
<svg style="left:852.8px;top:78.0px" width="12" height="12.4" viewBox="0 0 12 12.4"><defs><linearGradient id="lay" x1="0" x2="0" y1="0" y2="1"><stop offset="0" stop-color="#12c79a"/><stop offset="0.55" stop-color="#2fd08a"/><stop offset="1" stop-color="#c8d828"/></linearGradient></defs><path d="M2.6 0.4h6.8q0.8 0 0.8 0.8v5.4H1.8V1.2q0-0.8 0.8-0.8z" fill="url(#lay)"/><rect x="0.2" y="7.4" width="11.6" height="2.1" fill="#f2f2f2"/><rect x="1.8" y="10.4" width="8.4" height="1.5" fill="#e2e2e2"/></svg>
<svg style="left:880.3px;top:76.8px" width="12.4" height="13" viewBox="0 0 12.4 13"><rect x="0.0" y="10.6" width="2.4" height="2.2" fill="#12c79a"/><rect x="0.0" y="7.8" width="2.4" height="2.2" fill="#12c79a"/><rect x="0.0" y="5.1" width="2.4" height="2.2" fill="#12c79a"/><rect x="3.3" y="10.6" width="2.4" height="2.2" fill="#ececec"/><rect x="3.3" y="7.8" width="2.4" height="2.2" fill="#9fe8d2"/><rect x="3.3" y="5.1" width="2.4" height="2.2" fill="#9fe8d2"/><rect x="3.3" y="2.3" width="2.4" height="2.2" fill="#ececec"/><rect x="3.3" y="-0.4" width="2.4" height="2.2" fill="#ececec"/><rect x="6.6" y="10.6" width="2.4" height="2.2" fill="#12c79a"/><rect x="6.6" y="7.8" width="2.4" height="2.2" fill="#12c79a"/><rect x="9.9" y="10.6" width="2.4" height="2.2" fill="#ececec"/><rect x="9.9" y="7.8" width="2.4" height="2.2" fill="#ececec"/><rect x="9.9" y="5.1" width="2.4" height="2.2" fill="#ececec"/></svg>
<svg style="left:270.0px;top:655.0px" width="80" height="80" viewBox="0 0 80 80"><g transform="translate(-270 -655)"><path d="M307.4 664.6L331 678.2 307.7 692 283.6 679z" fill="#5c5952"/><path d="M283.6 679L307.7 692 306.4 719.8 283.6 706.8z" fill="#57544e"/><path d="M307.7 692L331 678.2 331 705.4 306.4 719.8z" fill="#4b4843"/><path d="M331.3 674.6V705.4" stroke="#1c50d8" stroke-width="1.1"/><path d="M331.3 705.6L304 722" stroke="#129a62" stroke-width="1.3"/><g font-family="'Liberation Sans',sans-serif" font-size="7" fill="#f4f4f4" stroke="#f4f4f4" stroke-width="0.15" text-anchor="middle" letter-spacing="-0.1"><text transform="matrix(-0.84 -0.5 0.84 -0.5 307.6 678.4)" y="2">Top</text><text transform="matrix(0.86 0.5 0 1 295.4 699.2)" y="2">Back</text><text transform="matrix(0.86 -0.5 0 1 319.4 698.6)" y="2">Left</text></g><text x="327.6" y="670.9" font-family="'Liberation Sans',sans-serif" font-size="10.4" font-weight="700" fill="#1e5ad8">Z</text><text x="294" y="728.8" font-family="'Liberation Sans',sans-serif" font-size="10.4" font-weight="700" fill="#129a62">Y</text></g></svg>
<div class="abs" style="left:345.2px;top:718.3px;width:19.6px;height:19px;background:#2a2a2c;border:1px solid #39393b;border-radius:3px"></div>
<div class="abs" style="left:368.8px;top:718.3px;width:19.6px;height:19px;background:#2a2a2c;border:1px solid #39393b;border-radius:3px"></div>
<div class="abs" style="left:392px;top:718.3px;width:78.6px;height:19px;background:#2a2a2c;border:1px solid #39393b;border-radius:3px"></div>
<svg style="left:351.0px;top:723.8px" width="8" height="8" viewBox="0 0 8 8"><path d="M4 0.2v7.6M0.2 4h7.6" stroke="#cfcfcf" stroke-width="1"/></svg>
<svg style="left:375.4px;top:726.0px" width="6.6" height="4" viewBox="0 0 6.6 4"><path d="M0.5 0.5l2.8 2.7 2.8-2.7" fill="none" stroke="#a8a8a8" stroke-width="1"/></svg>
<svg style="left:396.4px;top:722.4px" width="11" height="11" viewBox="0 0 11 11"><path d="M5.5 0.6v5.4M5.5 6l-4.6 3.4M5.5 6l4.6 3.4" stroke="#e2e2e2" stroke-width="0.9"/><path d="M5.5 3.6l3 4.6h-6z" fill="#12c79a"/><circle cx="5.5" cy="6.4" r="1.6" fill="#0e8f70"/></svg>
<div class="t " style="left:411.3px;top:722.1px;font-size:10px;letter-spacing:-0.85px;word-spacing:1.4px">Global CS</div>
</div>
</body></html>
